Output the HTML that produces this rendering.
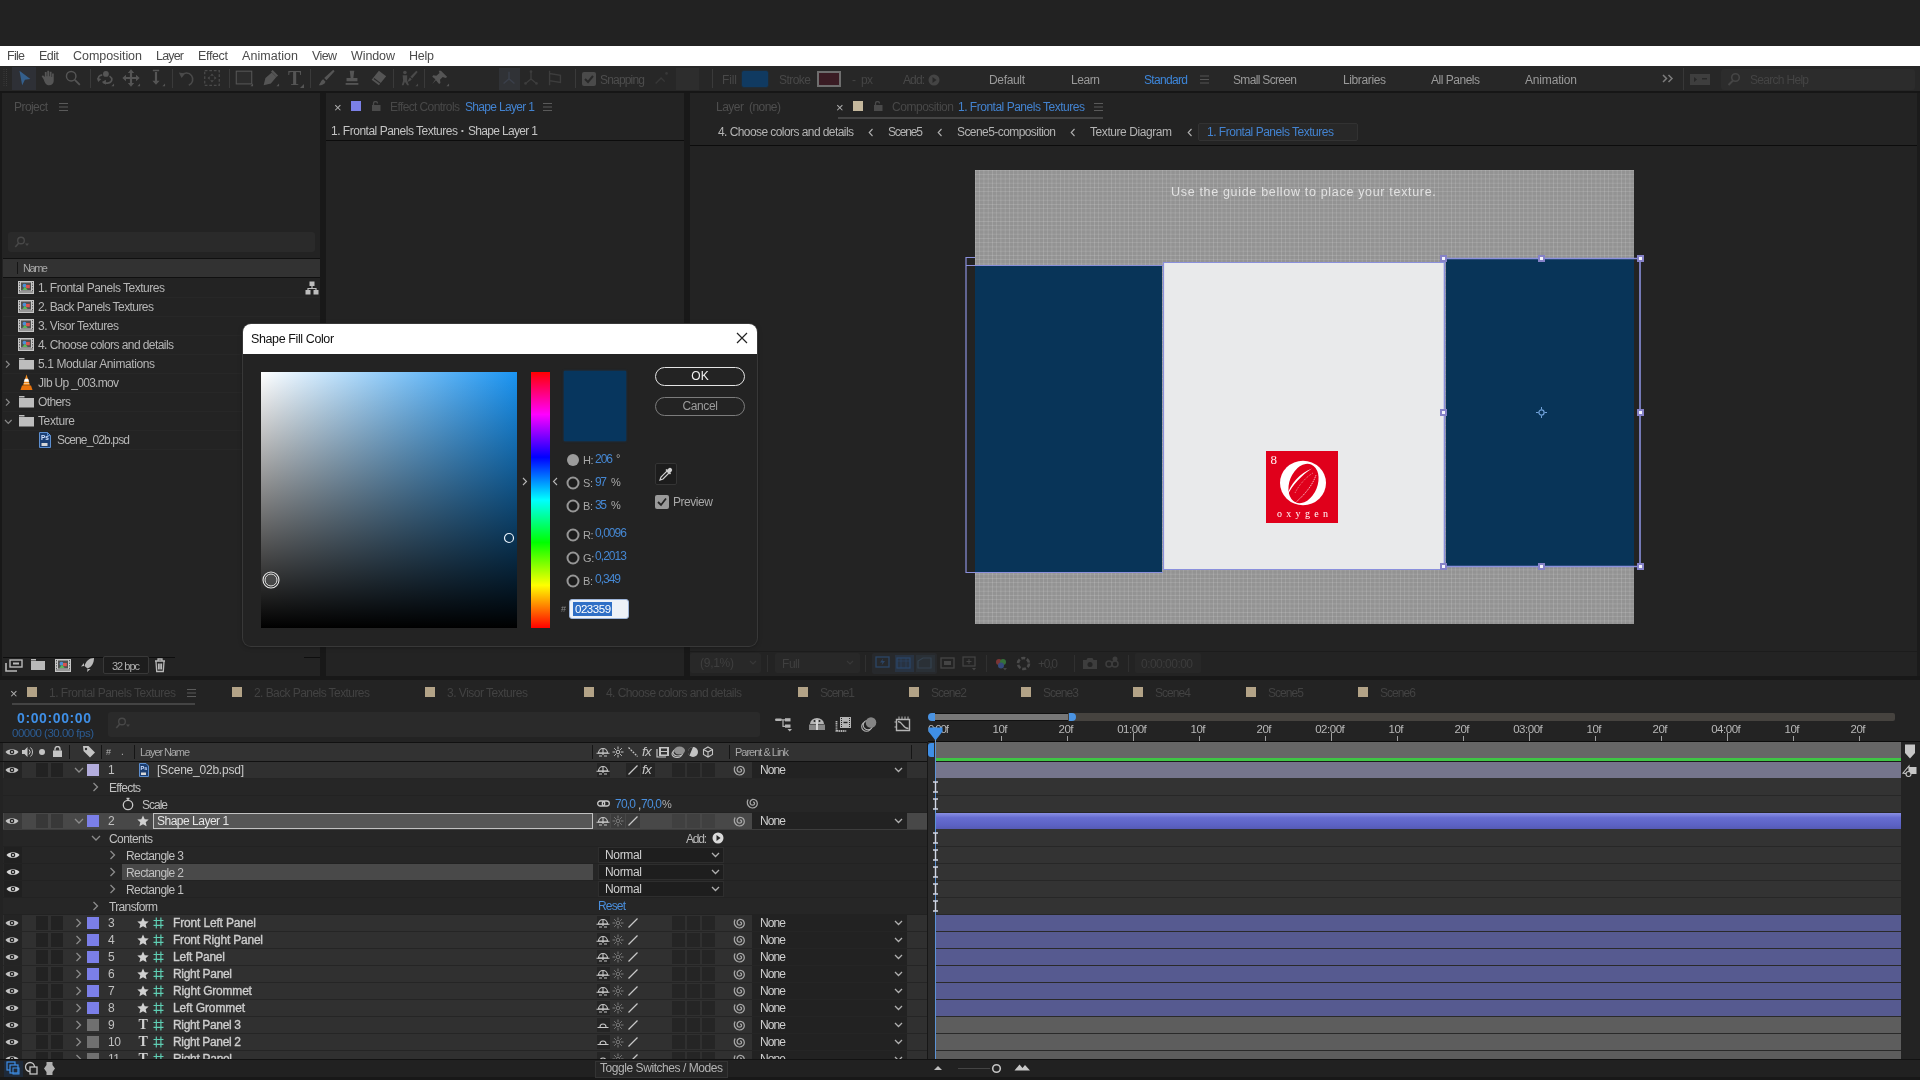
<!DOCTYPE html>
<html lang="en"><head><meta charset="utf-8"><title>After Effects - Shape Fill Color</title><style>
html,body{margin:0;padding:0;background:#222;overflow:hidden}
#r{will-change:transform;position:relative;width:1920px;height:1080px;overflow:hidden;background:#232323;font-family:"Liberation Sans",sans-serif;font-size:12px}
#r div,#r svg{position:absolute;box-sizing:border-box}
#r .t{white-space:pre;height:16px;line-height:16px}
</style></head><body><div id="r">
<div style="left:0px;top:0px;width:1920px;height:46px;background:#222222;"></div>
<div style="left:0px;top:46px;width:1920px;height:20px;background:#ffffff;"></div>
<div class="t" style="left:7px;top:48px;color:#4b4b4b;font-size:12.5px;letter-spacing:-0.71px;">File</div>
<div class="t" style="left:39px;top:48px;color:#4b4b4b;font-size:12.5px;letter-spacing:-0.51px;">Edit</div>
<div class="t" style="left:73px;top:48px;color:#4b4b4b;font-size:12.5px;letter-spacing:-0.05px;">Composition</div>
<div class="t" style="left:156px;top:48px;color:#4b4b4b;font-size:12.5px;letter-spacing:-0.82px;">Layer</div>
<div class="t" style="left:198px;top:48px;color:#4b4b4b;font-size:12.5px;letter-spacing:-0.35px;">Effect</div>
<div class="t" style="left:242px;top:48px;color:#4b4b4b;font-size:12.5px;letter-spacing:0.05px;">Animation</div>
<div class="t" style="left:312px;top:48px;color:#4b4b4b;font-size:12.5px;letter-spacing:-0.62px;">View</div>
<div class="t" style="left:351px;top:48px;color:#4b4b4b;font-size:12.5px;letter-spacing:-0.09px;">Window</div>
<div class="t" style="left:409px;top:48px;color:#4b4b4b;font-size:12.5px;letter-spacing:-0.24px;">Help</div>
<div style="left:0px;top:66px;width:1920px;height:25px;background:#272727;"></div>
<div style="left:0px;top:91px;width:1920px;height:2px;background:#161616;"></div>
<svg style="left:3px;top:68px;" width="6" height="20" viewBox="0 0 6 20"><path d="M1 1v18M3.5 1v18" stroke="#3a3a3a" stroke-width="1" stroke-dasharray="1 1"/></svg>
<div style="left:12px;top:67px;width:24px;height:23px;background:#2e3036;"></div>
<svg style="left:14px;top:68px;" width="20" height="20" viewBox="0 0 22 22"><path d="M6 3l12 9-6 1-3 6z" fill="#345f8c"/></svg>
<svg style="left:38px;top:68px;" width="20" height="20" viewBox="0 0 22 22"><path d="M6 12l-2-3 1.5-1 2 2V4.5h2V9h.7V3h2v6h.7V4h2v6h.6V6h1.8v8c0 3-2 5-5 5s-4.5-2-6.3-7z" fill="#555555"/></svg>
<svg style="left:63px;top:68px;" width="20" height="20" viewBox="0 0 22 22"><circle cx="9" cy="9" r="5.2" fill="none" stroke="#555555" stroke-width="1.6"/><path d="M13 13l5.5 5.5" stroke="#555555" stroke-width="2"/></svg>
<div style="left:90px;top:69px;width:1px;height:19px;background:#3a3a3a;"></div>
<div style="left:172px;top:69px;width:1px;height:19px;background:#3a3a3a;"></div>
<div style="left:229px;top:69px;width:1px;height:19px;background:#3a3a3a;"></div>
<div style="left:310px;top:69px;width:1px;height:19px;background:#3a3a3a;"></div>
<div style="left:393px;top:69px;width:1px;height:19px;background:#3a3a3a;"></div>
<div style="left:424px;top:69px;width:1px;height:19px;background:#3a3a3a;"></div>
<div style="left:575px;top:69px;width:1px;height:19px;background:#3a3a3a;"></div>
<div style="left:712px;top:69px;width:1px;height:19px;background:#3a3a3a;"></div>
<svg style="left:95px;top:68px;" width="20" height="20" viewBox="0 0 22 22"><circle cx="12" cy="6.500" r="3.200" fill="#555555"/><path d="M8 7.500C4.500 8 3 10 4 12.500M9 16c4 1.500 9 .5 9.500-3 .3-1.800-1-3-2.500-4" fill="none" stroke="#555555" stroke-width="1.800"/><path d="M2 11l5 1-3.500 3.500zM12 13l-4.500 2.500 4.500 3z" fill="#555555"/><path d="M18 20l3 0 0-3z" fill="#555555"/></svg>
<svg style="left:121px;top:68px;" width="20" height="20" viewBox="0 0 22 22"><path d="M11 1.500l3.500 4h-2.300v4.300h4.300V7.500l4 3.500-4 3.500v-2.300h-4.300v4.300h2.300L11 20.500l-3.500-4h2.300v-4.300H5.500v2.300L1.500 11l4-3.500v2.300h4.300V5.500H7.500z" fill="#555555"/><path d="M18 20l3 0 0-3z" fill="#555555"/></svg>
<svg style="left:146px;top:68px;" width="20" height="20" viewBox="0 0 22 22"><path d="M7.500 2h7v1.600h-7zM11 18.500l-4-4.500h2.800V4.500h2.400V14H15z" fill="#555555"/><path d="M18 20l3 0 0-3z" fill="#555555"/></svg>
<svg style="left:177px;top:68px;" width="20" height="20" viewBox="0 0 22 22"><path d="M5 8a7 7 0 1 1 8 11" fill="none" stroke="#4a4a4a" stroke-width="1.8"/><path d="M2 5l7 1-4 5z" fill="#4a4a4a"/></svg>
<svg style="left:202px;top:68px;" width="20" height="20" viewBox="0 0 22 22"><rect x="3" y="3" width="16" height="16" fill="none" stroke="#4a4a4a" stroke-width="1.400" stroke-dasharray="3 2"/><path d="M11 6l2 2.500h-4zM11 16l2-2.500h-4zM6 11l2.500-2v4zM16 11l-2.500-2v4z" fill="#4a4a4a"/></svg>
<svg style="left:234px;top:68px;" width="20" height="20" viewBox="0 0 22 22"><rect x="2.500" y="3.500" width="17" height="14" fill="#2c2c2c" stroke="#555555" stroke-width="1.200"/><path d="M18 20l3 0 0-3z" fill="#555555"/></svg>
<svg style="left:260px;top:68px;" width="20" height="20" viewBox="0 0 22 22"><path d="M4 19l2-8 7-6 5 5-6 7z" fill="#555555"/><path d="M13 3l6 6" stroke="#555555" stroke-width="2.500"/><path d="M18 20l3 0 0-3z" fill="#555555"/></svg>
<div class="t" style="left:288px;top:66px;height:24px;line-height:24px;font-size:20px;font-weight:bold;color:#555555;font-family:'Liberation Serif',serif">T</div>
<svg style="left:300px;top:84px;" width="4" height="4" viewBox="0 0 4 4"><path d="M0 4l4 0 0-4z" fill="#555555"/></svg>
<svg style="left:316px;top:68px;" width="20" height="20" viewBox="0 0 22 22"><path d="M19 2l1.500 1.500-9 10-2.500-2.500z" fill="#555555"/><path d="M8 12.500l2.500 2.500c-1 3-4 4-7.500 4 2-1.500 2-5 5-6.500z" fill="#555555"/></svg>
<svg style="left:342px;top:68px;" width="20" height="20" viewBox="0 0 22 22"><path d="M8.500 3h5l-1 8h4.500v3.500H5V11h4.500z" fill="#555555"/><rect x="4" y="16.500" width="14" height="2" fill="#555555"/></svg>
<svg style="left:368px;top:68px;" width="20" height="20" viewBox="0 0 22 22"><path d="M12 3l8 6-8 10-8-6z" fill="#555555"/><path d="M6.500 11.500l8 6" stroke="#282828" stroke-width="1.200"/></svg>
<svg style="left:399px;top:68px;" width="20" height="20" viewBox="0 0 22 22"><circle cx="6.500" cy="5" r="2" fill="#4a4a4a"/><path d="M4 8h5v6l2 5h-2l-2.500-4L5 19H3l1.500-5z" fill="#4a4a4a"/><path d="M19 3l1.500 1.500-6 7-2-2z" fill="#4a4a4a"/><path d="M12 10.500l2 2c-1 2-3 2.500-5 2.500 1.500-1 1.500-3.500 3-4.500z" fill="#4a4a4a"/><path d="M18 20l3 0 0-3z" fill="#4a4a4a"/></svg>
<svg style="left:430px;top:68px;" width="20" height="20" viewBox="0 0 22 22"><path d="M12 3l7 7-2 1-3-1-3 3 .5 3.500-1.500 1-3.500-4-4 4 3.500-5-3.500-3 1-1.500 3.500.5 3.500-3-1-2.500z" fill="#555555"/><path d="M18 20l3 0 0-3z" fill="#555555"/></svg>
<div style="left:499px;top:68px;width:21px;height:22px;background:#303236;"></div>
<svg style="left:499px;top:68px;" width="20" height="20" viewBox="0 0 22 22"><path d="M11 4v8l-6 5M11 12l6 5" fill="none" stroke="#3a3f4a" stroke-width="1.600"/></svg>
<svg style="left:521px;top:68px;" width="20" height="20" viewBox="0 0 22 22"><path d="M11 4v8l-6 5M11 12l6 5" fill="none" stroke="#3d3d3d" stroke-width="1.500"/><circle cx="11" cy="4" r="1.500" fill="#3d3d3d"/><circle cx="5" cy="17" r="1.500" fill="#3d3d3d"/><circle cx="17" cy="17" r="1.500" fill="#3d3d3d"/></svg>
<svg style="left:545px;top:68px;" width="20" height="20" viewBox="0 0 22 22"><path d="M5 6l12 2v8l-12-2zM5 3v16" fill="none" stroke="#3d3d3d" stroke-width="1.500"/></svg>
<div style="left:582px;top:72px;width:14px;height:14px;background:#4a4a4a;border-radius:2px"></div>
<svg style="left:582px;top:72px;" width="14" height="14" viewBox="0 0 14 14"><path d="M3 7l3 3 5-6" fill="none" stroke="#282828" stroke-width="2"/></svg>
<div class="t" style="left:600px;top:72px;color:#4d4d4d;font-size:12px;letter-spacing:-0.82px;">Snapping</div>
<svg style="left:652px;top:68px;" width="20" height="20" viewBox="0 0 22 22"><path d="M4 17l6-6 4 4" fill="none" stroke="#383838" stroke-width="1.500"/><circle cx="16" cy="6" r="1.500" fill="#383838"/></svg>
<div style="left:676px;top:68px;width:23px;height:22px;background:#2d2d2d;"></div>
<div class="t" style="left:722px;top:72px;color:#484848;font-size:12px;letter-spacing:-0.11px;">Fill</div>
<div style="left:742px;top:71px;width:26px;height:16px;background:#103a61;border-radius:2px;box-shadow:0 0 2px #103a61"></div>
<div class="t" style="left:779px;top:72px;color:#484848;font-size:12px;letter-spacing:-0.54px;">Stroke</div>
<div style="left:817px;top:71px;width:24px;height:16px;background:#3a1c24;border:2.500px solid #6e6e6e"></div>
<div class="t" style="left:852px;top:72px;color:#454545;font-size:12px;letter-spacing:-0.58px;">-  px</div>
<div class="t" style="left:903px;top:72px;color:#484848;font-size:12px;letter-spacing:-0.90px;">Add:</div>
<svg style="left:928px;top:74px;" width="12" height="12" viewBox="0 0 12 12"><circle cx="6" cy="6" r="5.500" fill="#444"/><path d="M4.500 3l4 3-4 3z" fill="#282828"/></svg>
<div class="t" style="left:989px;top:72px;color:#9a9a9a;font-size:12px;letter-spacing:-0.34px;">Default</div>
<div class="t" style="left:1071px;top:72px;color:#9a9a9a;font-size:12px;letter-spacing:-0.42px;">Learn</div>
<div class="t" style="left:1144px;top:72px;color:#3d86da;font-size:12px;letter-spacing:-0.67px;">Standard</div>
<div class="t" style="left:1233px;top:72px;color:#9a9a9a;font-size:12px;letter-spacing:-0.67px;">Small Screen</div>
<div class="t" style="left:1343px;top:72px;color:#9a9a9a;font-size:12px;letter-spacing:-0.38px;">Libraries</div>
<div class="t" style="left:1431px;top:72px;color:#9a9a9a;font-size:12px;letter-spacing:-0.48px;">All Panels</div>
<div class="t" style="left:1525px;top:72px;color:#9a9a9a;font-size:12px;letter-spacing:-0.17px;">Animation</div>
<svg style="left:1200px;top:75px;" width="10" height="9" viewBox="0 0 10 9"><path d="M0 1h9M0 4.500h9M0 8h9" stroke="#555" stroke-width="1"/></svg>
<svg style="left:1662px;top:74px;" width="12" height="9" viewBox="0 0 12 9"><path d="M1 1l3.500 3.500L1 8M6.500 1l3.500 3.500L6.500 8" fill="none" stroke="#7c7c7c" stroke-width="1.500"/></svg>
<div style="left:1683px;top:68px;width:1px;height:22px;background:#383838;"></div>
<svg style="left:1690px;top:74px;" width="20" height="11" viewBox="0 0 20 11"><rect x="0" y="0" width="20" height="11" fill="#3e3e3e"/><path d="M4 3l3 2.500-3 2.500zM12 4h5v1.500h-5z" fill="#282828"/></svg>
<div style="left:1721px;top:69px;width:194px;height:21px;background:#2c2c2c;border-radius:3px"></div>
<svg style="left:1727px;top:72px;" width="14" height="14" viewBox="0 0 14 14"><circle cx="8.500" cy="5.500" r="3.800" fill="none" stroke="#454545" stroke-width="1.600"/><path d="M6 8.500l-4.500 4.500" stroke="#454545" stroke-width="2"/></svg>
<div class="t" style="left:1750px;top:72px;color:#444444;font-size:12px;letter-spacing:-0.70px;">Search Help</div>
<div style="left:0px;top:93px;width:2px;height:587px;background:#181818;"></div>
<div style="left:320px;top:93px;width:6px;height:587px;background:#181818;"></div>
<div style="left:684px;top:93px;width:6px;height:587px;background:#181818;"></div>
<div style="left:0px;top:676px;width:1920px;height:4px;background:#181818;"></div>
<div class="t" style="left:14px;top:99px;color:#505050;font-size:12px;letter-spacing:-0.56px;">Project</div>
<svg style="left:59px;top:102px;" width="10" height="10" viewBox="0 0 10 10"><path d="M0 1.500h9M0 5h9M0 8.500h9" stroke="#5a5a5a" stroke-width="1"/></svg>
<div style="left:8px;top:232px;width:307px;height:20px;background:#2a2a2a;border-radius:3px"></div>
<svg style="left:13px;top:235px;" width="18" height="14" viewBox="0 0 18 14"><circle cx="8" cy="5.500" r="3.300" fill="none" stroke="#484848" stroke-width="1.400"/><path d="M5.800 8l-3.500 4" stroke="#484848" stroke-width="1.600"/><path d="M12 8.500h4l-2 2.500z" fill="#484848"/></svg>
<div style="left:3px;top:258px;width:317px;height:1px;background:#101010;"></div>
<div style="left:3px;top:259px;width:317px;height:18px;background:#323232;"></div>
<div style="left:3px;top:277px;width:317px;height:1px;background:#101010;"></div>
<div style="left:17px;top:262px;width:1px;height:12px;background:#151515;"></div>
<div class="t" style="left:23px;top:260px;color:#a8a8a8;font-size:11px;letter-spacing:-1.45px;">Name</div>
<div style="left:3px;top:297px;width:317px;height:1px;background:#272727;"></div>
<div class="t" style="left:38px;top:280px;color:#b6b6b6;font-size:12px;letter-spacing:-0.49px;">1. Frontal Panels Textures</div>
<svg style="left:18px;top:281px;" width="16" height="13" viewBox="0 0 16 13"><rect x="0" y="0" width="16" height="13" fill="#c6c6c6"/><rect x="3" y="1.500" width="10" height="8" fill="#505050"/><path d="M1.500 1v9.500M14.500 1v9.500" stroke="#555" stroke-width="1" stroke-dasharray="1.300 1.300"/><path d="M1 11h14" stroke="#666" stroke-width="1"/><circle cx="6.500" cy="4.700" r="1.900" fill="#4c8fd6"/><rect x="8" y="4" width="3.800" height="3.200" fill="#d9534f"/><path d="M4.300 9l2.700-3.300L9.700 9z" fill="#5cb85c"/></svg>
<div style="left:3px;top:316px;width:317px;height:1px;background:#272727;"></div>
<div class="t" style="left:38px;top:299px;color:#b6b6b6;font-size:12px;letter-spacing:-0.57px;">2. Back Panels Textures</div>
<svg style="left:18px;top:300px;" width="16" height="13" viewBox="0 0 16 13"><rect x="0" y="0" width="16" height="13" fill="#c6c6c6"/><rect x="3" y="1.500" width="10" height="8" fill="#505050"/><path d="M1.500 1v9.500M14.500 1v9.500" stroke="#555" stroke-width="1" stroke-dasharray="1.300 1.300"/><path d="M1 11h14" stroke="#666" stroke-width="1"/><circle cx="6.500" cy="4.700" r="1.900" fill="#4c8fd6"/><rect x="8" y="4" width="3.800" height="3.200" fill="#d9534f"/><path d="M4.300 9l2.700-3.300L9.700 9z" fill="#5cb85c"/></svg>
<div style="left:3px;top:335px;width:317px;height:1px;background:#272727;"></div>
<div class="t" style="left:38px;top:318px;color:#b6b6b6;font-size:12px;letter-spacing:-0.50px;">3. Visor Textures</div>
<svg style="left:18px;top:319px;" width="16" height="13" viewBox="0 0 16 13"><rect x="0" y="0" width="16" height="13" fill="#c6c6c6"/><rect x="3" y="1.500" width="10" height="8" fill="#505050"/><path d="M1.500 1v9.500M14.500 1v9.500" stroke="#555" stroke-width="1" stroke-dasharray="1.300 1.300"/><path d="M1 11h14" stroke="#666" stroke-width="1"/><circle cx="6.500" cy="4.700" r="1.900" fill="#4c8fd6"/><rect x="8" y="4" width="3.800" height="3.200" fill="#d9534f"/><path d="M4.300 9l2.700-3.300L9.700 9z" fill="#5cb85c"/></svg>
<div style="left:3px;top:354px;width:317px;height:1px;background:#272727;"></div>
<div class="t" style="left:38px;top:337px;color:#b6b6b6;font-size:12px;letter-spacing:-0.57px;">4. Choose colors and details</div>
<svg style="left:18px;top:338px;" width="16" height="13" viewBox="0 0 16 13"><rect x="0" y="0" width="16" height="13" fill="#c6c6c6"/><rect x="3" y="1.500" width="10" height="8" fill="#505050"/><path d="M1.500 1v9.500M14.500 1v9.500" stroke="#555" stroke-width="1" stroke-dasharray="1.300 1.300"/><path d="M1 11h14" stroke="#666" stroke-width="1"/><circle cx="6.500" cy="4.700" r="1.900" fill="#4c8fd6"/><rect x="8" y="4" width="3.800" height="3.200" fill="#d9534f"/><path d="M4.300 9l2.700-3.300L9.700 9z" fill="#5cb85c"/></svg>
<div style="left:3px;top:373px;width:317px;height:1px;background:#272727;"></div>
<div class="t" style="left:38px;top:356px;color:#b6b6b6;font-size:12px;letter-spacing:-0.40px;">5.1 Modular Animations</div>
<svg style="left:19px;top:357px;" width="15" height="13" viewBox="0 0 15 13"><path d="M0 2.500h5.500V1H0z" fill="#bdbdbd"/><rect x="0" y="3" width="15" height="9.500" fill="#bdbdbd"/></svg>
<svg style="left:5px;top:360px;" width="6" height="9" viewBox="0 0 6 9"><path d="M1 1l3.300 3.300L1 7.600" fill="none" stroke="#8a8a8a" stroke-width="1.200"/></svg>
<div style="left:3px;top:392px;width:317px;height:1px;background:#272727;"></div>
<div class="t" style="left:38px;top:375px;color:#b6b6b6;font-size:12px;letter-spacing:-0.69px;">JIb Up _003.mov</div>
<svg style="left:19px;top:374px;" width="15" height="17" viewBox="0 0 15 17"><path d="M7.500 0.500l3.500 11h-7z" fill="#f08a1c"/><path d="M6 5h3l.8 2.500H5.200zM4.600 9.500h5.800" fill="#fff" stroke="#fff" stroke-width="0.500"/><path d="M1.500 16l1.500-4.500h9L13.500 16z" fill="#e9730c"/></svg>
<div style="left:3px;top:411px;width:317px;height:1px;background:#272727;"></div>
<div class="t" style="left:38px;top:394px;color:#b6b6b6;font-size:12px;letter-spacing:-0.60px;">Others</div>
<svg style="left:19px;top:395px;" width="15" height="13" viewBox="0 0 15 13"><path d="M0 2.500h5.500V1H0z" fill="#bdbdbd"/><rect x="0" y="3" width="15" height="9.500" fill="#bdbdbd"/></svg>
<svg style="left:5px;top:398px;" width="6" height="9" viewBox="0 0 6 9"><path d="M1 1l3.300 3.300L1 7.600" fill="none" stroke="#8a8a8a" stroke-width="1.200"/></svg>
<div style="left:3px;top:430px;width:317px;height:1px;background:#272727;"></div>
<div class="t" style="left:38px;top:413px;color:#b6b6b6;font-size:12px;letter-spacing:-0.39px;">Texture</div>
<svg style="left:19px;top:414px;" width="15" height="13" viewBox="0 0 15 13"><path d="M0 2.500h5.500V1H0z" fill="#bdbdbd"/><rect x="0" y="3" width="15" height="9.500" fill="#bdbdbd"/></svg>
<svg style="left:4px;top:419px;" width="9" height="6" viewBox="0 0 9 6"><path d="M1 1l3.300 3.300L7.600 1" fill="none" stroke="#8a8a8a" stroke-width="1.200"/></svg>
<div style="left:3px;top:449px;width:317px;height:1px;background:#272727;"></div>
<svg style="left:39px;top:432px;" width="12" height="16" viewBox="0 0 12 16"><path d="M0.500 0.500h8l3 3v12h-11z" fill="#1c3f73" stroke="#5d8fd0" stroke-width="1"/><path d="M8.500 0.500v3h3" fill="none" stroke="#5d8fd0" stroke-width="1"/><rect x="2.500" y="11" width="6" height="3" fill="#d8d8d8"/></svg>
<div class="t" style="left:41px;top:434px;font-size:6.500px;line-height:7px;height:7px;color:#cfe0ff;font-weight:bold">Ps</div>
<div class="t" style="left:57px;top:432px;color:#b6b6b6;font-size:12px;letter-spacing:-0.87px;">Scene_02b.psd</div>
<svg style="left:305px;top:281px;" width="14" height="14" viewBox="0 0 14 14"><rect x="4.500" y="0.500" width="5" height="4.500" fill="#bdbdbd"/><rect x="0.500" y="9" width="5" height="4.500" fill="#bdbdbd"/><rect x="8.500" y="9" width="5" height="4.500" fill="#bdbdbd"/><path d="M7 5v2.500M3 9V7.500h8V9" fill="none" stroke="#bdbdbd" stroke-width="1.200"/></svg>
<div style="left:3px;top:657px;width:172px;height:1px;background:#0e0e0e;"></div>
<div style="left:304px;top:657px;width:16px;height:1px;background:#0e0e0e;"></div>
<svg style="left:5px;top:659px;" width="18" height="13" viewBox="0 0 18 13"><rect x="5" y="1" width="12" height="7" fill="none" stroke="#b9b9b9" stroke-width="1.400"/><rect x="8" y="3.500" width="6" height="2" fill="#b9b9b9"/><path d="M1 4v8h11" fill="none" stroke="#b9b9b9" stroke-width="1.600"/></svg>
<svg style="left:31px;top:659px;" width="15" height="12" viewBox="0 0 15 12"><path d="M0 1.500h5V0H0z" fill="#b9b9b9"/><rect x="0" y="2" width="14" height="9" fill="#b9b9b9"/></svg>
<svg style="left:55px;top:659px;" width="16" height="13" viewBox="0 0 16 13"><rect x="0" y="0" width="16" height="13" fill="#c6c6c6"/><rect x="3" y="1.500" width="10" height="8" fill="#505050"/><path d="M1.500 1v9.500M14.500 1v9.500" stroke="#555" stroke-width="1" stroke-dasharray="1.300 1.300"/><path d="M1 11h14" stroke="#666" stroke-width="1"/><circle cx="6.500" cy="4.700" r="1.900" fill="#4c8fd6"/><rect x="8" y="4" width="3.800" height="3.200" fill="#d9534f"/><path d="M4.300 9l2.700-3.300L9.700 9z" fill="#5cb85c"/></svg>
<svg style="left:80px;top:657px;" width="16" height="16" viewBox="0 0 16 16"><path d="M14 1c-5 0-8 3-9.500 8l3 2.500C12 10 14 6 14 1zM4 9l-3 .5 3-3.500zM7.500 12l-.500 3 3.500-3z" fill="#b9b9b9"/></svg>
<div style="left:103px;top:656px;width:46px;height:18px;background:#1d1d1d;border:1px solid #383838;border-radius:2px"></div>
<div class="t" style="left:112px;top:658px;color:#b0b0b0;font-size:11px;letter-spacing:-1.00px;">32 bpc</div>
<svg style="left:154px;top:658px;" width="12" height="15" viewBox="0 0 12 15"><path d="M1 3h10M4 3V1h4v2M2 3.500l.7 10h6.600l.7-10M4.500 5.500v6M6 5.500v6M7.500 5.500v6" fill="none" stroke="#b9b9b9" stroke-width="1.300"/></svg>
<div class="t" style="left:334px;top:100px;color:#b0b0b0;font-size:13px;letter-spacing:-0.46px;">×</div>
<div style="left:351px;top:101px;width:10px;height:10px;background:#7b80e6;"></div>
<svg style="left:372px;top:101px;" width="9" height="10" viewBox="0 0 9 10"><rect x="0" y="4" width="8.500" height="6" fill="#4a4a4a"/><path d="M1.500 4V2.500a2 2 0 0 1 4 0" fill="none" stroke="#4a4a4a" stroke-width="1.300"/></svg>
<div class="t" style="left:390px;top:99px;color:#484848;font-size:12px;letter-spacing:-0.61px;">Effect Controls</div>
<div class="t" style="left:465px;top:99px;color:#4383d0;font-size:12px;letter-spacing:-0.67px;">Shape Layer 1</div>
<svg style="left:543px;top:102px;" width="10" height="10" viewBox="0 0 10 10"><path d="M0 1.500h9M0 5h9M0 8.500h9" stroke="#5a5a5a" stroke-width="1"/></svg>
<div class="t" style="left:331px;top:123px;color:#c4c4c4;font-size:12px;letter-spacing:-0.49px;">1. Frontal Panels Textures</div>
<div class="t" style="left:461px;top:123px;color:#c4c4c4;font-size:8px;letter-spacing:-0.28px;">•</div>
<div class="t" style="left:468px;top:123px;color:#c4c4c4;font-size:12px;letter-spacing:-0.67px;">Shape Layer 1</div>
<div style="left:326px;top:140px;width:358px;height:1px;background:#0c0c0c;"></div>
<div class="t" style="left:716px;top:99px;color:#4e4e4e;font-size:12px;letter-spacing:-0.53px;">Layer  (none)</div>
<div class="t" style="left:836px;top:100px;color:#b0b0b0;font-size:13px;letter-spacing:-0.46px;">×</div>
<div style="left:853px;top:101px;width:10px;height:10px;background:#c4b79c;"></div>
<svg style="left:874px;top:101px;" width="9" height="10" viewBox="0 0 9 10"><rect x="0" y="4" width="8.500" height="6" fill="#4a4a4a"/><path d="M1.500 4V2.500a2 2 0 0 1 4 0" fill="none" stroke="#4a4a4a" stroke-width="1.300"/></svg>
<div class="t" style="left:892px;top:99px;color:#484848;font-size:12px;letter-spacing:-0.47px;">Composition</div>
<div class="t" style="left:958px;top:99px;color:#4383d0;font-size:12px;letter-spacing:-0.49px;">1. Frontal Panels Textures</div>
<svg style="left:1094px;top:102px;" width="10" height="10" viewBox="0 0 10 10"><path d="M0 1.500h9M0 5h9M0 8.500h9" stroke="#5a5a5a" stroke-width="1"/></svg>
<div style="left:838px;top:117px;width:265px;height:2px;background:#444444;"></div>
<div class="t" style="left:718px;top:124px;color:#b4b4b4;font-size:12px;letter-spacing:-0.57px;">4. Choose colors and details</div>
<div class="t" style="left:888px;top:124px;color:#b4b4b4;font-size:12px;letter-spacing:-1.14px;">Scene5</div>
<div class="t" style="left:957px;top:124px;color:#b4b4b4;font-size:12px;letter-spacing:-0.57px;">Scene5-composition</div>
<div class="t" style="left:1090px;top:124px;color:#b4b4b4;font-size:12px;letter-spacing:-0.43px;">Texture Diagram</div>
<svg style="left:868px;top:127.5px;" width="6" height="9" viewBox="0 0 6 9"><path d="M4.500 1L1.200 4.500 4.500 8" fill="none" stroke="#b0b0b0" stroke-width="1.100"/></svg>
<svg style="left:937px;top:127.5px;" width="6" height="9" viewBox="0 0 6 9"><path d="M4.500 1L1.200 4.500 4.500 8" fill="none" stroke="#b0b0b0" stroke-width="1.100"/></svg>
<svg style="left:1070px;top:127.5px;" width="6" height="9" viewBox="0 0 6 9"><path d="M4.500 1L1.200 4.500 4.500 8" fill="none" stroke="#b0b0b0" stroke-width="1.100"/></svg>
<svg style="left:1187px;top:127.5px;" width="6" height="9" viewBox="0 0 6 9"><path d="M4.500 1L1.200 4.500 4.500 8" fill="none" stroke="#b0b0b0" stroke-width="1.100"/></svg>
<div style="left:1198px;top:123px;width:160px;height:18px;background:#282828;border:1px solid #323232;border-radius:2px"></div>
<div class="t" style="left:1207px;top:124px;color:#4383d0;font-size:12px;letter-spacing:-0.49px;">1. Frontal Panels Textures</div>
<div style="left:690px;top:145px;width:1230px;height:1px;background:#0c0c0c;"></div>
<div style="left:975px;top:170px;width:659px;height:454px;background-color:#939393;background-image:linear-gradient(rgba(255,255,255,.14) 1px,transparent 1px),linear-gradient(90deg,rgba(255,255,255,.14) 1px,transparent 1px);background-size:4.250px 4.250px"></div>
<div class="t" style="left:1171px;top:184px;color:#e2e2e2;font-size:12.5px;letter-spacing:0.68px;">Use the guide bellow to place your texture.</div>
<div style="left:975px;top:266px;width:187px;height:306px;background:#083458;"></div>
<div style="left:1164px;top:263px;width:280px;height:306px;background:#e9eaeb;"></div>
<div style="left:1446px;top:259px;width:188px;height:307px;background:#083458;"></div>
<svg style="left:960px;top:250px;" width="690" height="330" viewBox="0 0 690 330"><g fill="none" stroke="#8a90dc" stroke-width="1.200"><path d="M15 7.500H6V322.500H203"/><path d="M6 15.500H203.500"/><path d="M484 12.500H203.500V319.500H484" /><path d="M484.500 8.500H680V316.500H484.500z" stroke-width="1.600"/></g></svg>
<div style="left:1440px;top:255px;width:7px;height:7px;background:#f4f4fa;border:2px solid #8682c8"></div>
<div style="left:1537.5px;top:255px;width:7px;height:7px;background:#f4f4fa;border:2px solid #8682c8"></div>
<div style="left:1636.5px;top:255px;width:7px;height:7px;background:#f4f4fa;border:2px solid #8682c8"></div>
<div style="left:1440px;top:408.5px;width:7px;height:7px;background:#f4f4fa;border:2px solid #8682c8"></div>
<div style="left:1636.5px;top:408.5px;width:7px;height:7px;background:#f4f4fa;border:2px solid #8682c8"></div>
<div style="left:1440px;top:563px;width:7px;height:7px;background:#f4f4fa;border:2px solid #8682c8"></div>
<div style="left:1537.5px;top:563px;width:7px;height:7px;background:#f4f4fa;border:2px solid #8682c8"></div>
<div style="left:1636.5px;top:563px;width:7px;height:7px;background:#f4f4fa;border:2px solid #8682c8"></div>
<svg style="left:1535px;top:406px;" width="13" height="13" viewBox="0 0 13 13"><circle cx="6.500" cy="6.500" r="2.600" fill="none" stroke="#6fa0d8" stroke-width="1.200"/><path d="M6.500 1v2.500M6.500 9.500V12M1 6.500h2.500M9.500 6.500H12" stroke="#6fa0d8" stroke-width="1"/></svg>
<div style="left:1266px;top:451px;width:72px;height:72px;background:#e0001b;"></div>
<svg style="left:1266px;top:451px;" width="72" height="72" viewBox="0 0 72 72"><ellipse cx="37" cy="32" rx="23" ry="22.200" fill="#fff"/><ellipse cx="37.500" cy="32.500" rx="14" ry="20.500" fill="#e0001b" transform="rotate(22 37.500 32.500)"/><path d="M21 45C24 33 34 22 46 17.500C36 24 27 33 21 45z" fill="#fff"/><path d="M29 52C36 46 46 36 50 24" fill="none" stroke="#fff" stroke-width="0.700" stroke-dasharray="1.500 0.800"/><path d="M29 42C33 34 40 26 47 22" fill="none" stroke="#fff" stroke-width="0.500" stroke-dasharray="1 1"/></svg>
<div class="t" style="left:1270.5px;top:452px;color:#fff0f0;font-size:13px;letter-spacing:-1.00px;font-family:'Liberation Serif',serif;">8</div>
<div class="t" style="left:1277px;top:506px;color:#ffffff;font-size:10px;letter-spacing:4.31px;font-family:'Liberation Serif',serif;">oxygen</div>
<div style="left:690px;top:653px;width:71px;height:20px;background:#282828;border-radius:2px"></div>
<div class="t" style="left:700px;top:655px;color:#3f3f3f;font-size:12px;letter-spacing:-0.27px;">(9,1%)</div>
<svg style="left:749px;top:660px;" width="8" height="6" viewBox="0 0 8 6"><path d="M1 1l3 3 3-3" fill="none" stroke="#383838" stroke-width="1.200"/></svg>
<div style="left:767px;top:655px;width:1px;height:17px;background:#303030;"></div>
<div style="left:775px;top:653px;width:85px;height:20px;background:#282828;border-radius:2px"></div>
<div class="t" style="left:782px;top:656px;color:#3f3f3f;font-size:12px;letter-spacing:-0.44px;">Full</div>
<svg style="left:846px;top:660px;" width="8" height="6" viewBox="0 0 8 6"><path d="M1 1l3 3 3-3" fill="none" stroke="#383838" stroke-width="1.200"/></svg>
<div style="left:865px;top:655px;width:1px;height:17px;background:#303030;"></div>
<div style="left:872px;top:653px;width:65px;height:21px;background:#27292c;border-radius:2px"></div>
<div style="left:895px;top:655px;width:19px;height:17px;background:#283342;"></div>
<div style="left:916px;top:655px;width:19px;height:17px;background:#2a3036;"></div>
<svg style="left:875px;top:656px;" width="16" height="14" viewBox="0 0 16 14"><rect x="1" y="1" width="13" height="10" fill="none" stroke="#2c4566" stroke-width="1.300"/><path d="M8 2.500l-3 4h2.500l-1 3 3.500-4.500H7.500z" fill="#2c4566"/></svg>
<svg style="left:896px;top:656px;" width="16" height="14" viewBox="0 0 16 14"><rect x="1" y="2" width="13" height="10" fill="none" stroke="#2b466a" stroke-width="1.200"/><path d="M1 5h13M5 2v10M10 2v10" stroke="#2b466a" stroke-width="0.600"/></svg>
<svg style="left:917px;top:656px;" width="16" height="14" viewBox="0 0 16 14"><path d="M1 12V5l5-3h8v10z" fill="none" stroke="#34414f" stroke-width="1.200"/></svg>
<svg style="left:940px;top:657px;" width="16" height="13" viewBox="0 0 16 13"><rect x="1" y="1" width="13" height="10" fill="none" stroke="#454545" stroke-width="1.300"/><rect x="4" y="4" width="7" height="4" fill="#454545"/></svg>
<svg style="left:962px;top:656px;" width="16" height="15" viewBox="0 0 16 15"><rect x="1" y="1" width="12" height="9" fill="none" stroke="#454545" stroke-width="1.200"/><path d="M7 3v5M4.500 5.500h5" stroke="#454545" stroke-width="1"/><path d="M10 12h4l-2 2.500z" fill="#454545"/></svg>
<div style="left:986px;top:655px;width:1px;height:17px;background:#303030;"></div>
<svg style="left:994px;top:657px;" width="14" height="14" viewBox="0 0 14 14"><circle cx="5" cy="5" r="3" fill="#7a3535"/><circle cx="9" cy="5" r="3" fill="#35703a"/><circle cx="7" cy="8.500" r="3" fill="#354a7a"/><path d="M9 11h4l-2 2.500z" fill="#454545"/></svg>
<svg style="left:1016px;top:656px;" width="15" height="15" viewBox="0 0 15 15"><circle cx="7.500" cy="7.500" r="5.500" fill="none" stroke="#4a4a4a" stroke-width="2.600" stroke-dasharray="4 1.760"/></svg>
<div class="t" style="left:1038px;top:656px;color:#3f3f3f;font-size:12px;letter-spacing:-1.23px;">+0,0</div>
<div style="left:1074px;top:655px;width:1px;height:17px;background:#303030;"></div>
<svg style="left:1082px;top:657px;" width="16" height="13" viewBox="0 0 16 13"><path d="M1 3h3.500l1-2h5l1 2H15v9H1z" fill="#3d3d3d"/><circle cx="8" cy="7.500" r="2.500" fill="#232323"/></svg>
<svg style="left:1104px;top:655px;" width="17" height="15" viewBox="0 0 17 15"><circle cx="5" cy="9" r="3" fill="none" stroke="#3d3d3d" stroke-width="1.500"/><circle cx="11" cy="9" r="3" fill="none" stroke="#3d3d3d" stroke-width="1.500"/><circle cx="11" cy="4" r="2.500" fill="#3d3d3d"/></svg>
<div style="left:1128px;top:655px;width:1px;height:17px;background:#303030;"></div>
<div style="left:1135px;top:653px;width:66px;height:20px;background:#272727;border-radius:2px"></div>
<div class="t" style="left:1141px;top:656px;color:#3c3c3c;font-size:12px;letter-spacing:-0.52px;">0:00:00:00</div>
<div style="left:690px;top:651px;width:1230px;height:1px;background:#1c1c1c;"></div>
<div style="left:1917px;top:93px;width:3px;height:583px;background:#1b1b1b;"></div>
<div class="t" style="left:10px;top:686px;color:#b0b0b0;font-size:13px;letter-spacing:-0.46px;">×</div>
<div style="left:27px;top:687px;width:10px;height:10px;background:#b3a387;"></div>
<div class="t" style="left:49px;top:685px;color:#424242;font-size:12px;letter-spacing:-0.49px;">1. Frontal Panels Textures</div>
<div style="left:232px;top:687px;width:10px;height:10px;background:#b3a387;"></div>
<div class="t" style="left:254px;top:685px;color:#424242;font-size:12px;letter-spacing:-0.57px;">2. Back Panels Textures</div>
<div style="left:425px;top:687px;width:10px;height:10px;background:#b3a387;"></div>
<div class="t" style="left:447px;top:685px;color:#424242;font-size:12px;letter-spacing:-0.50px;">3. Visor Textures</div>
<div style="left:584px;top:687px;width:10px;height:10px;background:#b3a387;"></div>
<div class="t" style="left:606px;top:685px;color:#424242;font-size:12px;letter-spacing:-0.57px;">4. Choose colors and details</div>
<div style="left:798px;top:687px;width:10px;height:10px;background:#b3a387;"></div>
<div class="t" style="left:820px;top:685px;color:#424242;font-size:12px;letter-spacing:-1.14px;">Scene1</div>
<div style="left:909px;top:687px;width:10px;height:10px;background:#b3a387;"></div>
<div class="t" style="left:931px;top:685px;color:#424242;font-size:12px;letter-spacing:-0.94px;">Scene2</div>
<div style="left:1021px;top:687px;width:10px;height:10px;background:#b3a387;"></div>
<div class="t" style="left:1043px;top:685px;color:#424242;font-size:12px;letter-spacing:-0.94px;">Scene3</div>
<div style="left:1133px;top:687px;width:10px;height:10px;background:#b3a387;"></div>
<div class="t" style="left:1155px;top:685px;color:#424242;font-size:12px;letter-spacing:-0.94px;">Scene4</div>
<div style="left:1246px;top:687px;width:10px;height:10px;background:#b3a387;"></div>
<div class="t" style="left:1268px;top:685px;color:#424242;font-size:12px;letter-spacing:-0.94px;">Scene5</div>
<div style="left:1358px;top:687px;width:10px;height:10px;background:#b3a387;"></div>
<div class="t" style="left:1380px;top:685px;color:#424242;font-size:12px;letter-spacing:-0.94px;">Scene6</div>
<svg style="left:187px;top:688px;" width="10" height="10" viewBox="0 0 10 10"><path d="M0 1.500h9M0 5h9M0 8.500h9" stroke="#5a5a5a" stroke-width="1"/></svg>
<div style="left:12px;top:703px;width:183px;height:2px;background:#444444;"></div>
<div class="t" style="left:17px;top:710px;color:#3f8fe6;font-size:14px;letter-spacing:0.61px;font-weight:bold;">0:00:00:00</div>
<div class="t" style="left:12px;top:725px;color:#2c5c93;font-size:11.5px;letter-spacing:-0.51px;">00000 (30.00 fps)</div>
<div style="left:108px;top:712px;width:652px;height:25px;background:#2a2a2a;border-radius:3px"></div>
<svg style="left:114px;top:716px;" width="18" height="14" viewBox="0 0 18 14"><circle cx="8" cy="5.500" r="3.300" fill="none" stroke="#484848" stroke-width="1.400"/><path d="M5.800 8l-3.500 4" stroke="#484848" stroke-width="1.600"/><path d="M12 8.500h4l-2 2.500z" fill="#484848"/></svg>
<svg style="left:774px;top:717px;" width="19" height="15" viewBox="0 0 19 15"><rect x="1" y="1.500" width="7" height="2.500" rx="1.200" fill="#b4b4b4"/><path d="M8 2.800h3M9 2.800v6.500h2.500" fill="none" stroke="#b4b4b4" stroke-width="1.200"/><rect x="11" y="1.200" width="5.500" height="3.200" fill="#b4b4b4"/><rect x="11" y="7.500" width="5.500" height="3.200" fill="#b4b4b4"/><path d="M13.500 12h4.500l-2.250 2.500z" fill="#b4b4b4"/></svg>
<svg style="left:808px;top:716px;" width="18" height="16" viewBox="0 0 18 16"><path d="M2 8a7 6 0 0 1 14 0z" fill="#b4b4b4"/><circle cx="6.500" cy="5" r="1" fill="#232323"/><circle cx="11.500" cy="5" r="1" fill="#232323"/><rect x="1" y="8.500" width="16" height="5.500" fill="#888888"/><rect x="8" y="4" width="2" height="10" fill="#d4d4d4"/></svg>
<svg style="left:835px;top:716px;" width="17" height="16" viewBox="0 0 17 16"><path d="M1.500 5v10h10" fill="none" stroke="#b4b4b4" stroke-width="1.800" stroke-dasharray="1.200 0.600"/><rect x="5" y="1" width="11" height="11" fill="#b4b4b4"/><path d="M6.500 2v9M14.500 2v9" stroke="#232323" stroke-width="1" stroke-dasharray="1 1"/><rect x="8.500" y="5.800" width="4" height="1.400" fill="#232323"/></svg>
<svg style="left:860px;top:716px;" width="18" height="16" viewBox="0 0 18 16"><circle cx="6.500" cy="10.500" r="4.800" fill="#232323" stroke="#b4b4b4" stroke-width="1.100"/><circle cx="8" cy="9" r="4.800" fill="#232323" stroke="#b4b4b4" stroke-width="1.100"/><circle cx="11" cy="6.500" r="5.300" fill="#858585"/></svg>
<svg style="left:894px;top:715px;" width="18" height="18" viewBox="0 0 18 18"><path d="M2.500 4.500h13v11h-13z" fill="none" stroke="#b4b4b4" stroke-width="1.400"/><path d="M5 1.500v3M8 1.500v3M11 1.500v3M14 1.500v3M0.500 7h2M0.500 12h2" stroke="#b4b4b4" stroke-width="1"/><path d="M4 6.500c5 0 4.500 7 10.500 7" fill="none" stroke="#b4b4b4" stroke-width="1.300"/></svg>
<div style="left:0px;top:742px;width:928px;height:1px;background:#111111;"></div>
<div style="left:3px;top:743px;width:925px;height:18px;background:#323232;"></div>
<div style="left:0px;top:761px;width:928px;height:1px;background:#111111;"></div>
<svg style="left:5px;top:747px;" width="14" height="10" viewBox="0 0 14 10"><path d="M0.500 5C3 1.200 11 1.200 13.500 5 11 8.800 3 8.800 0.500 5z" fill="#c4c4c4"/><circle cx="7" cy="5" r="2.300" fill="#222"/><circle cx="7" cy="5" r="1" fill="#c4c4c4"/></svg>
<svg style="left:21px;top:746px;" width="12" height="12" viewBox="0 0 12 12"><path d="M1 4h2.500l3-3v10l-3-3H1z" fill="#c4c4c4"/><path d="M8 3.500a3.500 3.500 0 0 1 0 5M9.500 1.500a6 6 0 0 1 0 9" fill="none" stroke="#c4c4c4" stroke-width="1"/></svg>
<svg style="left:38px;top:748px;" width="8" height="8" viewBox="0 0 8 8"><circle cx="4" cy="4" r="3" fill="#c4c4c4"/></svg>
<svg style="left:53px;top:746px;" width="9" height="11" viewBox="0 0 9 11"><rect x="0" y="4.500" width="9" height="6.500" fill="#c4c4c4"/><path d="M2 4.500V3a2.500 2.500 0 0 1 5 0v1.500" fill="none" stroke="#c4c4c4" stroke-width="1.400"/></svg>
<div style="left:69px;top:745px;width:1px;height:14px;background:#151515;"></div>
<div style="left:101px;top:745px;width:1px;height:14px;background:#151515;"></div>
<div style="left:134px;top:745px;width:1px;height:14px;background:#151515;"></div>
<div style="left:592px;top:745px;width:1px;height:14px;background:#151515;"></div>
<div style="left:729px;top:745px;width:1px;height:14px;background:#151515;"></div>
<div style="left:911px;top:745px;width:1px;height:14px;background:#151515;"></div>
<svg style="left:82px;top:745px;" width="14" height="14" viewBox="0 0 14 14"><path d="M1 1h5.500l6.500 6.500-5 5L1.500 6z" fill="#c4c4c4"/><circle cx="4" cy="4" r="1.200" fill="#323232"/></svg>
<div class="t" style="left:106px;top:744px;color:#b0b0b0;font-size:9px;letter-spacing:-0.32px;">#</div>
<div class="t" style="left:121px;top:744px;color:#b0b0b0;font-size:10px;letter-spacing:-0.35px;">.</div>
<div class="t" style="left:140px;top:744px;color:#a8a8a8;font-size:11px;letter-spacing:-1.10px;">Layer Name</div>
<div class="t" style="left:735px;top:744px;color:#a8a8a8;font-size:11px;letter-spacing:-1.00px;">Parent &amp; Link</div>
<svg style="left:596px;top:746px;" width="14" height="12" viewBox="0 0 14 12"><path d="M2.500 7a4.500 4.500 0 0 1 9 0z" fill="none" stroke="#c4c4c4" stroke-width="1.200"/><path d="M7 3v6M0.500 7.200h13M3 10h3M8 10h3" stroke="#c4c4c4" stroke-width="1.100"/></svg>
<svg style="left:612px;top:746px;" width="12" height="12" viewBox="0 0 12 12"><circle cx="6" cy="6" r="1.800" fill="none" stroke="#c4c4c4" stroke-width="1"/><path d="M6 0.500v2.500M6 9v2.500M0.500 6h2.500M9 6h2.500M2.200 2.200l1.700 1.700M8.100 8.100l1.700 1.700M9.800 2.200L8.100 3.900M3.900 8.100L2.200 9.800" stroke="#c4c4c4" stroke-width="1"/></svg>
<svg style="left:627px;top:746px;" width="12" height="12" viewBox="0 0 12 12"><path d="M1.500 1.500L10.500 10.500" stroke="#c4c4c4" stroke-width="1.300" stroke-dasharray="2 1"/></svg>
<div class="t" style="left:642px;top:744px;font-size:13.500px;font-style:italic;color:#c4c4c4;letter-spacing:-0.800px">fx</div>
<svg style="left:656px;top:746px;" width="14" height="12" viewBox="0 0 14 12"><path d="M1 3v8h9" fill="none" stroke="#c4c4c4" stroke-width="1.200"/><rect x="3" y="1" width="10" height="9" fill="#c4c4c4"/><rect x="5" y="2.500" width="6" height="2.500" fill="#323232"/><rect x="5" y="6" width="6" height="2.500" fill="#323232"/></svg>
<svg style="left:671px;top:745px;" width="15" height="14" viewBox="0 0 15 14"><ellipse cx="6" cy="9" rx="5" ry="3.500" fill="none" stroke="#c4c4c4" stroke-width="1.100"/><ellipse cx="7" cy="7.500" rx="5" ry="3.500" fill="#323232" stroke="#c4c4c4" stroke-width="1.100"/><ellipse cx="8.500" cy="5.500" rx="5.500" ry="4" fill="#909090"/></svg>
<svg style="left:687px;top:746px;" width="12" height="12" viewBox="0 0 12 12"><circle cx="6" cy="6" r="5" fill="#c4c4c4"/><path d="M6 1a5 5 0 0 0-3.540 8.540z" fill="#323232"/></svg>
<svg style="left:702px;top:746px;" width="12" height="12" viewBox="0 0 12 12"><path d="M6 1l4.500 2.500v5L6 11 1.500 8.500v-5zM1.500 3.500L6 6l4.500-2.500M6 6v5" fill="none" stroke="#c4c4c4" stroke-width="1.100"/></svg>
<div style="left:3px;top:762px;width:925px;height:17px;background:#303030;"></div>
<div style="left:3px;top:778px;width:925px;height:1px;background:#252525;"></div>
<div style="left:4px;top:762px;width:18px;height:16px;background:#242424;"></div>
<svg style="left:5px;top:765px;" width="14" height="10" viewBox="0 0 14 10"><path d="M0.500 5C3 1.200 11 1.200 13.500 5 11 8.800 3 8.800 0.500 5z" fill="#c4c4c4"/><circle cx="7" cy="5" r="2.300" fill="#222"/><circle cx="7" cy="5" r="1" fill="#c4c4c4"/></svg>
<div style="left:36px;top:763px;width:12px;height:14px;background:#222222;"></div>
<div style="left:51px;top:763px;width:12px;height:14px;background:#222222;"></div>
<svg style="left:74px;top:767px;" width="10" height="7" viewBox="0 0 10 7"><path d="M1 1l4 4 4-4" fill="none" stroke="#8c8c8c" stroke-width="1.300"/></svg>
<div style="left:87px;top:764px;width:12px;height:12px;background:#b3addd;"></div>
<div class="t" style="left:108px;top:762px;color:#c0c0c0;font-size:12px;letter-spacing:-0.42px;">1</div>
<svg style="left:139px;top:763px;" width="10" height="14" viewBox="0 0 10 14"><path d="M0.500 0.500h6.500l2.500 2.500v10.500h-9z" fill="#1c3f73" stroke="#5d8fd0" stroke-width="1"/><rect x="2" y="9.500" width="5" height="2.500" fill="#d8d8d8"/></svg>
<div class="t" style="left:140.500px;top:765px;font-size:5.500px;line-height:6px;height:6px;color:#cfe0ff;font-weight:bold">Ps</div>
<div class="t" style="left:157px;top:762px;color:#cacaca;font-size:12px;letter-spacing:-0.22px;">[Scene_02b.psd]</div>
<div style="left:597px;top:763px;width:13px;height:14px;background:#252525;"></div>
<div style="left:672px;top:763px;width:13px;height:14px;background:#252525;"></div>
<div style="left:687px;top:763px;width:13px;height:14px;background:#252525;"></div>
<div style="left:702px;top:763px;width:13px;height:14px;background:#252525;"></div>
<svg style="left:596px;top:764px;" width="14" height="12" viewBox="0 0 14 12"><path d="M2.500 7a4.500 4.500 0 0 1 9 0z" fill="none" stroke="#c8c8c8" stroke-width="1.200"/><path d="M7 3v6M0.500 7.200h13M3 10h3M8 10h3" stroke="#c8c8c8" stroke-width="1.100"/></svg>
<div style="left:626px;top:763px;width:14px;height:14px;background:#252525;"></div>
<svg style="left:627px;top:764px;" width="12" height="12" viewBox="0 0 12 12"><path d="M1.500 10.500L10.500 1.500" stroke="#c8c8c8" stroke-width="1.300"/></svg>
<div style="left:641px;top:763px;width:14px;height:14px;background:#252525;"></div>
<div class="t" style="left:642px;top:762px;font-size:13.500px;font-style:italic;color:#c8c8c8;letter-spacing:-0.800px">fx</div>
<svg style="left:733px;top:763px;" width="14" height="14" viewBox="0 0 14 14"><path d="M7.0 6.2L7.4 6.1L7.9 6.2L8.3 6.6L8.5 7.1L8.5 7.8L8.2 8.5L7.5 9.0L6.6 9.2L5.6 9.0L4.8 8.4L4.2 7.4L4.1 6.2L4.5 5.0L5.5 4.0L6.8 3.4L8.3 3.5L9.8 4.2L10.8 5.5L11.3 7.1L11.1 9.0L10.1 10.6L8.4 11.7L6.4 12.0L4.3 11.5L2.6 10.1L1.5 8.1L1.3 5.8L2.1 3.5" fill="none" stroke="#a8a8a8" stroke-width="1.250" stroke-linejoin="round"/></svg>
<div style="left:752px;top:762px;width:155px;height:16px;background:#222222;"></div>
<div class="t" style="left:760px;top:762px;color:#cfcfcf;font-size:12px;letter-spacing:-0.90px;">None</div>
<svg style="left:894px;top:767px;" width="9" height="6" viewBox="0 0 9 6"><path d="M1 1l3.500 3.500L8 1" fill="none" stroke="#b0b0b0" stroke-width="1.300"/></svg>
<div style="left:3px;top:779px;width:925px;height:17px;background:#262626;"></div>
<div style="left:3px;top:795px;width:925px;height:1px;background:#222222;"></div>
<svg style="left:91.5px;top:782px;" width="7" height="10" viewBox="0 0 7 10"><path d="M1.500 1l4 4-4 4" fill="none" stroke="#8c8c8c" stroke-width="1.300"/></svg>
<div class="t" style="left:109px;top:780px;color:#c0c0c0;font-size:12px;letter-spacing:-0.74px;">Effects</div>
<div style="left:3px;top:796px;width:925px;height:17px;background:#262626;"></div>
<div style="left:3px;top:812px;width:925px;height:1px;background:#222222;"></div>
<div class="t" style="left:142px;top:797px;color:#c0c0c0;font-size:12px;letter-spacing:-1.00px;">Scale</div>
<svg style="left:122px;top:797px;" width="12" height="14" viewBox="0 0 12 14"><circle cx="6" cy="8" r="4.700" fill="none" stroke="#c8c8c8" stroke-width="1.300"/><path d="M4.500 1.500h3M6 1.500v2" stroke="#c8c8c8" stroke-width="1.300"/></svg>
<svg style="left:597px;top:799px;" width="13" height="9" viewBox="0 0 13 9"><rect x="0.700" y="2" width="7" height="5" rx="2.500" fill="none" stroke="#c8c8c8" stroke-width="1.300"/><rect x="5.300" y="2" width="7" height="5" rx="2.500" fill="none" stroke="#c8c8c8" stroke-width="1.300"/></svg>
<div class="t" style="left:615px;top:796px;color:#4a8fdd;font-size:12px;letter-spacing:-0.78px;">70,0</div>
<div class="t" style="left:638px;top:797px;color:#c0c0c0;font-size:12px;letter-spacing:-0.42px;">,</div>
<div class="t" style="left:641px;top:796px;color:#4a8fdd;font-size:12px;letter-spacing:-0.78px;">70,0</div>
<div class="t" style="left:662px;top:796px;color:#b0b0b0;font-size:11px;letter-spacing:-0.39px;">%</div>
<svg style="left:746px;top:796px;" width="14" height="14" viewBox="0 0 14 14"><path d="M7.0 6.2L7.4 6.1L7.9 6.2L8.3 6.6L8.5 7.1L8.5 7.8L8.2 8.5L7.5 9.0L6.6 9.2L5.6 9.0L4.8 8.4L4.2 7.4L4.1 6.2L4.5 5.0L5.5 4.0L6.8 3.4L8.3 3.5L9.8 4.2L10.8 5.5L11.3 7.1L11.1 9.0L10.1 10.6L8.4 11.7L6.4 12.0L4.3 11.5L2.6 10.1L1.5 8.1L1.3 5.8L2.1 3.5" fill="none" stroke="#a8a8a8" stroke-width="1.250" stroke-linejoin="round"/></svg>
<div style="left:3px;top:813px;width:925px;height:17px;background:#484848;"></div>
<div style="left:3px;top:829px;width:925px;height:1px;background:#3d3d3d;"></div>
<div style="left:4px;top:813px;width:18px;height:16px;background:#3a3a3a;"></div>
<svg style="left:5px;top:816px;" width="14" height="10" viewBox="0 0 14 10"><path d="M0.500 5C3 1.200 11 1.200 13.500 5 11 8.800 3 8.800 0.500 5z" fill="#c4c4c4"/><circle cx="7" cy="5" r="2.300" fill="#222"/><circle cx="7" cy="5" r="1" fill="#c4c4c4"/></svg>
<div style="left:36px;top:814px;width:12px;height:14px;background:#383838;"></div>
<div style="left:51px;top:814px;width:12px;height:14px;background:#383838;"></div>
<svg style="left:74px;top:818px;" width="10" height="7" viewBox="0 0 10 7"><path d="M1 1l4 4 4-4" fill="none" stroke="#8c8c8c" stroke-width="1.300"/></svg>
<div style="left:87px;top:815px;width:12px;height:12px;background:#7b7fe8;"></div>
<div class="t" style="left:108px;top:813px;color:#c0c0c0;font-size:12px;letter-spacing:-0.42px;">2</div>
<svg style="left:137px;top:815px;" width="12" height="12" viewBox="0 0 12 12"><path d="M6 0.500l1.700 3.700 4 .4-3 2.700.9 4L6 9.200 2.400 11.300l.9-4-3-2.700 4-.4z" fill="#d0d0d0"/></svg>
<div style="left:153px;top:813px;width:440px;height:16px;background:#565656;border:1.500px solid #c2c2c2"></div>
<div class="t" style="left:157px;top:813px;color:#e6e6e6;font-size:12px;letter-spacing:-0.50px;">Shape Layer 1</div>
<div style="left:597px;top:814px;width:13px;height:14px;background:#404040;"></div>
<div style="left:672px;top:814px;width:13px;height:14px;background:#404040;"></div>
<div style="left:687px;top:814px;width:13px;height:14px;background:#404040;"></div>
<div style="left:702px;top:814px;width:13px;height:14px;background:#404040;"></div>
<svg style="left:596px;top:815px;" width="14" height="12" viewBox="0 0 14 12"><path d="M2.500 7a4.500 4.500 0 0 1 9 0z" fill="none" stroke="#c8c8c8" stroke-width="1.200"/><path d="M7 3v6M0.500 7.200h13M3 10h3M8 10h3" stroke="#c8c8c8" stroke-width="1.100"/></svg>
<div style="left:611px;top:814px;width:14px;height:14px;background:#3c3c3c;"></div>
<svg style="left:612px;top:815px;" width="12" height="12" viewBox="0 0 12 12"><circle cx="6" cy="6" r="1.800" fill="none" stroke="#7d7d7d" stroke-width="1"/><path d="M6 0.500v2.500M6 9v2.500M0.500 6h2.500M9 6h2.500M2.200 2.200l1.700 1.700M8.100 8.100l1.700 1.700M9.800 2.200L8.100 3.900M3.900 8.100L2.200 9.800" stroke="#7d7d7d" stroke-width="1"/></svg>
<div style="left:626px;top:814px;width:14px;height:14px;background:#3c3c3c;"></div>
<svg style="left:627px;top:815px;" width="12" height="12" viewBox="0 0 12 12"><path d="M1.500 10.500L10.500 1.500" stroke="#c8c8c8" stroke-width="1.300"/></svg>
<svg style="left:733px;top:814px;" width="14" height="14" viewBox="0 0 14 14"><path d="M7.0 6.2L7.4 6.1L7.9 6.2L8.3 6.6L8.5 7.1L8.5 7.8L8.2 8.5L7.5 9.0L6.6 9.2L5.6 9.0L4.8 8.4L4.2 7.4L4.1 6.2L4.5 5.0L5.5 4.0L6.8 3.4L8.3 3.5L9.8 4.2L10.8 5.5L11.3 7.1L11.1 9.0L10.1 10.6L8.4 11.7L6.4 12.0L4.3 11.5L2.6 10.1L1.5 8.1L1.3 5.8L2.1 3.5" fill="none" stroke="#a8a8a8" stroke-width="1.250" stroke-linejoin="round"/></svg>
<div style="left:752px;top:813px;width:155px;height:16px;background:#222222;"></div>
<div class="t" style="left:760px;top:813px;color:#cfcfcf;font-size:12px;letter-spacing:-0.90px;">None</div>
<svg style="left:894px;top:818px;" width="9" height="6" viewBox="0 0 9 6"><path d="M1 1l3.500 3.500L8 1" fill="none" stroke="#b0b0b0" stroke-width="1.300"/></svg>
<div style="left:3px;top:830px;width:925px;height:17px;background:#262626;"></div>
<div style="left:3px;top:846px;width:925px;height:1px;background:#222222;"></div>
<svg style="left:91px;top:835px;" width="10" height="7" viewBox="0 0 10 7"><path d="M1 1l4 4 4-4" fill="none" stroke="#8c8c8c" stroke-width="1.300"/></svg>
<div class="t" style="left:109px;top:831px;color:#c0c0c0;font-size:12px;letter-spacing:-0.58px;">Contents</div>
<div class="t" style="left:686px;top:831px;color:#b8b8b8;font-size:12px;letter-spacing:-1.23px;">Add:</div>
<svg style="left:712px;top:832px;" width="12" height="12" viewBox="0 0 12 12"><circle cx="6" cy="6" r="5.500" fill="#dadada"/><path d="M4.500 3l4 3-4 3z" fill="#262626"/></svg>
<div style="left:3px;top:847px;width:925px;height:17px;background:#262626;"></div>
<div style="left:3px;top:863px;width:925px;height:1px;background:#222222;"></div>
<div style="left:4px;top:847px;width:18px;height:16px;background:#202020;"></div>
<svg style="left:6px;top:850px;" width="14" height="10" viewBox="0 0 14 10"><path d="M0.500 5C3 1.200 11 1.200 13.500 5 11 8.800 3 8.800 0.500 5z" fill="#d8d8d8"/><circle cx="7" cy="5" r="2.300" fill="#222"/><circle cx="7" cy="5" r="1" fill="#d8d8d8"/></svg>
<svg style="left:108.5px;top:850px;" width="7" height="10" viewBox="0 0 7 10"><path d="M1.500 1l4 4-4 4" fill="none" stroke="#8c8c8c" stroke-width="1.300"/></svg>
<div class="t" style="left:126px;top:848px;color:#c0c0c0;font-size:12px;letter-spacing:-0.60px;">Rectangle 3</div>
<div style="left:598px;top:847px;width:126px;height:16px;background:#1e1e1e;border:1px solid #2e2e2e"></div>
<div class="t" style="left:605px;top:847px;color:#d0d0d0;font-size:12px;letter-spacing:-0.33px;">Normal</div>
<svg style="left:711px;top:852px;" width="9" height="6" viewBox="0 0 9 6"><path d="M1 1l3.500 3.500L8 1" fill="none" stroke="#b0b0b0" stroke-width="1.300"/></svg>
<div style="left:3px;top:864px;width:925px;height:17px;background:#262626;"></div>
<div style="left:3px;top:880px;width:925px;height:1px;background:#222222;"></div>
<div style="left:4px;top:864px;width:18px;height:16px;background:#202020;"></div>
<svg style="left:6px;top:867px;" width="14" height="10" viewBox="0 0 14 10"><path d="M0.500 5C3 1.200 11 1.200 13.500 5 11 8.800 3 8.800 0.500 5z" fill="#d8d8d8"/><circle cx="7" cy="5" r="2.300" fill="#222"/><circle cx="7" cy="5" r="1" fill="#d8d8d8"/></svg>
<div style="left:122px;top:864px;width:471px;height:16px;background:#494949;"></div>
<svg style="left:108.5px;top:867px;" width="7" height="10" viewBox="0 0 7 10"><path d="M1.500 1l4 4-4 4" fill="none" stroke="#8c8c8c" stroke-width="1.300"/></svg>
<div class="t" style="left:126px;top:865px;color:#c0c0c0;font-size:12px;letter-spacing:-0.60px;">Rectangle 2</div>
<div style="left:598px;top:864px;width:126px;height:16px;background:#1e1e1e;border:1px solid #2e2e2e"></div>
<div class="t" style="left:605px;top:864px;color:#d0d0d0;font-size:12px;letter-spacing:-0.33px;">Normal</div>
<svg style="left:711px;top:869px;" width="9" height="6" viewBox="0 0 9 6"><path d="M1 1l3.500 3.500L8 1" fill="none" stroke="#b0b0b0" stroke-width="1.300"/></svg>
<div style="left:3px;top:881px;width:925px;height:17px;background:#262626;"></div>
<div style="left:3px;top:897px;width:925px;height:1px;background:#222222;"></div>
<div style="left:4px;top:881px;width:18px;height:16px;background:#202020;"></div>
<svg style="left:6px;top:884px;" width="14" height="10" viewBox="0 0 14 10"><path d="M0.500 5C3 1.200 11 1.200 13.500 5 11 8.800 3 8.800 0.500 5z" fill="#d8d8d8"/><circle cx="7" cy="5" r="2.300" fill="#222"/><circle cx="7" cy="5" r="1" fill="#d8d8d8"/></svg>
<svg style="left:108.5px;top:884px;" width="7" height="10" viewBox="0 0 7 10"><path d="M1.500 1l4 4-4 4" fill="none" stroke="#8c8c8c" stroke-width="1.300"/></svg>
<div class="t" style="left:126px;top:882px;color:#c0c0c0;font-size:12px;letter-spacing:-0.60px;">Rectangle 1</div>
<div style="left:598px;top:881px;width:126px;height:16px;background:#1e1e1e;border:1px solid #2e2e2e"></div>
<div class="t" style="left:605px;top:881px;color:#d0d0d0;font-size:12px;letter-spacing:-0.33px;">Normal</div>
<svg style="left:711px;top:886px;" width="9" height="6" viewBox="0 0 9 6"><path d="M1 1l3.500 3.500L8 1" fill="none" stroke="#b0b0b0" stroke-width="1.300"/></svg>
<div style="left:3px;top:898px;width:925px;height:17px;background:#262626;"></div>
<div style="left:3px;top:914px;width:925px;height:1px;background:#222222;"></div>
<svg style="left:91.5px;top:901px;" width="7" height="10" viewBox="0 0 7 10"><path d="M1.500 1l4 4-4 4" fill="none" stroke="#8c8c8c" stroke-width="1.300"/></svg>
<div class="t" style="left:109px;top:899px;color:#c0c0c0;font-size:12px;letter-spacing:-0.65px;">Transform</div>
<div class="t" style="left:598px;top:898px;color:#4a8fdd;font-size:12px;letter-spacing:-0.84px;">Reset</div>
<div style="left:3px;top:915px;width:925px;height:17px;background:#303030;"></div>
<div style="left:3px;top:931px;width:925px;height:1px;background:#252525;"></div>
<div style="left:4px;top:915px;width:18px;height:16px;background:#242424;"></div>
<svg style="left:5px;top:918px;" width="14" height="10" viewBox="0 0 14 10"><path d="M0.500 5C3 1.200 11 1.200 13.500 5 11 8.800 3 8.800 0.500 5z" fill="#c4c4c4"/><circle cx="7" cy="5" r="2.300" fill="#222"/><circle cx="7" cy="5" r="1" fill="#c4c4c4"/></svg>
<div style="left:36px;top:916px;width:12px;height:14px;background:#222222;"></div>
<div style="left:51px;top:916px;width:12px;height:14px;background:#222222;"></div>
<svg style="left:75px;top:918px;" width="7" height="10" viewBox="0 0 7 10"><path d="M1.500 1l4 4-4 4" fill="none" stroke="#8c8c8c" stroke-width="1.300"/></svg>
<div style="left:87px;top:917px;width:12px;height:12px;background:#7b7fe8;"></div>
<div class="t" style="left:108px;top:915px;color:#c0c0c0;font-size:12px;letter-spacing:-0.42px;">3</div>
<svg style="left:137px;top:917px;" width="12" height="12" viewBox="0 0 12 12"><path d="M6 0.500l1.700 3.700 4 .4-3 2.700.9 4L6 9.200 2.400 11.300l.9-4-3-2.700 4-.4z" fill="#d0d0d0"/></svg>
<svg style="left:152.5px;top:917px;" width="11" height="12" viewBox="0 0 11 12"><path d="M3.300 0.500v11M7.900 0.500v11M0.500 3.500h10M0.500 8.300h10" stroke="#5fcfb4" stroke-width="1.150"/></svg>
<div class="t" style="left:173px;top:915px;color:#cdcdcd;font-size:12px;letter-spacing:-0.16px;-webkit-text-stroke:0.350px #cdcdcd;">Front Left Panel</div>
<div style="left:597px;top:916px;width:13px;height:14px;background:#252525;"></div>
<div style="left:672px;top:916px;width:13px;height:14px;background:#252525;"></div>
<div style="left:687px;top:916px;width:13px;height:14px;background:#252525;"></div>
<div style="left:702px;top:916px;width:13px;height:14px;background:#252525;"></div>
<svg style="left:596px;top:917px;" width="14" height="12" viewBox="0 0 14 12"><path d="M2.500 7a4.500 4.500 0 0 1 9 0z" fill="none" stroke="#c8c8c8" stroke-width="1.200"/><path d="M7 3v6M0.500 7.200h13M3 10h3M8 10h3" stroke="#c8c8c8" stroke-width="1.100"/></svg>
<svg style="left:612px;top:917px;" width="12" height="12" viewBox="0 0 12 12"><circle cx="6" cy="6" r="1.800" fill="none" stroke="#7d7d7d" stroke-width="1"/><path d="M6 0.500v2.500M6 9v2.500M0.500 6h2.500M9 6h2.500M2.200 2.200l1.700 1.700M8.100 8.100l1.700 1.700M9.800 2.200L8.100 3.900M3.900 8.100L2.200 9.800" stroke="#7d7d7d" stroke-width="1"/></svg>
<svg style="left:627px;top:917px;" width="12" height="12" viewBox="0 0 12 12"><path d="M1.500 10.500L10.500 1.500" stroke="#c8c8c8" stroke-width="1.300"/></svg>
<svg style="left:733px;top:916px;" width="14" height="14" viewBox="0 0 14 14"><path d="M7.0 6.2L7.4 6.1L7.9 6.2L8.3 6.6L8.5 7.1L8.5 7.8L8.2 8.5L7.5 9.0L6.6 9.2L5.6 9.0L4.8 8.4L4.2 7.4L4.1 6.2L4.5 5.0L5.5 4.0L6.8 3.4L8.3 3.5L9.8 4.2L10.8 5.5L11.3 7.1L11.1 9.0L10.1 10.6L8.4 11.7L6.4 12.0L4.3 11.5L2.6 10.1L1.5 8.1L1.3 5.8L2.1 3.5" fill="none" stroke="#a8a8a8" stroke-width="1.250" stroke-linejoin="round"/></svg>
<div style="left:752px;top:915px;width:155px;height:16px;background:#222222;"></div>
<div class="t" style="left:760px;top:915px;color:#cfcfcf;font-size:12px;letter-spacing:-0.90px;">None</div>
<svg style="left:894px;top:920px;" width="9" height="6" viewBox="0 0 9 6"><path d="M1 1l3.500 3.500L8 1" fill="none" stroke="#b0b0b0" stroke-width="1.300"/></svg>
<div style="left:3px;top:932px;width:925px;height:17px;background:#303030;"></div>
<div style="left:3px;top:948px;width:925px;height:1px;background:#252525;"></div>
<div style="left:4px;top:932px;width:18px;height:16px;background:#242424;"></div>
<svg style="left:5px;top:935px;" width="14" height="10" viewBox="0 0 14 10"><path d="M0.500 5C3 1.200 11 1.200 13.500 5 11 8.800 3 8.800 0.500 5z" fill="#c4c4c4"/><circle cx="7" cy="5" r="2.300" fill="#222"/><circle cx="7" cy="5" r="1" fill="#c4c4c4"/></svg>
<div style="left:36px;top:933px;width:12px;height:14px;background:#222222;"></div>
<div style="left:51px;top:933px;width:12px;height:14px;background:#222222;"></div>
<svg style="left:75px;top:935px;" width="7" height="10" viewBox="0 0 7 10"><path d="M1.500 1l4 4-4 4" fill="none" stroke="#8c8c8c" stroke-width="1.300"/></svg>
<div style="left:87px;top:934px;width:12px;height:12px;background:#7b7fe8;"></div>
<div class="t" style="left:108px;top:932px;color:#c0c0c0;font-size:12px;letter-spacing:-0.42px;">4</div>
<svg style="left:137px;top:934px;" width="12" height="12" viewBox="0 0 12 12"><path d="M6 0.500l1.700 3.700 4 .4-3 2.700.9 4L6 9.200 2.400 11.300l.9-4-3-2.700 4-.4z" fill="#d0d0d0"/></svg>
<svg style="left:152.5px;top:934px;" width="11" height="12" viewBox="0 0 11 12"><path d="M3.300 0.500v11M7.900 0.500v11M0.500 3.500h10M0.500 8.300h10" stroke="#5fcfb4" stroke-width="1.150"/></svg>
<div class="t" style="left:173px;top:932px;color:#cdcdcd;font-size:12px;letter-spacing:-0.21px;-webkit-text-stroke:0.350px #cdcdcd;">Front Right Panel</div>
<div style="left:597px;top:933px;width:13px;height:14px;background:#252525;"></div>
<div style="left:672px;top:933px;width:13px;height:14px;background:#252525;"></div>
<div style="left:687px;top:933px;width:13px;height:14px;background:#252525;"></div>
<div style="left:702px;top:933px;width:13px;height:14px;background:#252525;"></div>
<svg style="left:596px;top:934px;" width="14" height="12" viewBox="0 0 14 12"><path d="M2.500 7a4.500 4.500 0 0 1 9 0z" fill="none" stroke="#c8c8c8" stroke-width="1.200"/><path d="M7 3v6M0.500 7.200h13M3 10h3M8 10h3" stroke="#c8c8c8" stroke-width="1.100"/></svg>
<svg style="left:612px;top:934px;" width="12" height="12" viewBox="0 0 12 12"><circle cx="6" cy="6" r="1.800" fill="none" stroke="#7d7d7d" stroke-width="1"/><path d="M6 0.500v2.500M6 9v2.500M0.500 6h2.500M9 6h2.500M2.200 2.200l1.700 1.700M8.100 8.100l1.700 1.700M9.800 2.200L8.100 3.900M3.900 8.100L2.200 9.800" stroke="#7d7d7d" stroke-width="1"/></svg>
<svg style="left:627px;top:934px;" width="12" height="12" viewBox="0 0 12 12"><path d="M1.500 10.500L10.500 1.500" stroke="#c8c8c8" stroke-width="1.300"/></svg>
<svg style="left:733px;top:933px;" width="14" height="14" viewBox="0 0 14 14"><path d="M7.0 6.2L7.4 6.1L7.9 6.2L8.3 6.6L8.5 7.1L8.5 7.8L8.2 8.5L7.5 9.0L6.6 9.2L5.6 9.0L4.8 8.4L4.2 7.4L4.1 6.2L4.5 5.0L5.5 4.0L6.8 3.4L8.3 3.5L9.8 4.2L10.8 5.5L11.3 7.1L11.1 9.0L10.1 10.6L8.4 11.7L6.4 12.0L4.3 11.5L2.6 10.1L1.5 8.1L1.3 5.8L2.1 3.5" fill="none" stroke="#a8a8a8" stroke-width="1.250" stroke-linejoin="round"/></svg>
<div style="left:752px;top:932px;width:155px;height:16px;background:#222222;"></div>
<div class="t" style="left:760px;top:932px;color:#cfcfcf;font-size:12px;letter-spacing:-0.90px;">None</div>
<svg style="left:894px;top:937px;" width="9" height="6" viewBox="0 0 9 6"><path d="M1 1l3.500 3.500L8 1" fill="none" stroke="#b0b0b0" stroke-width="1.300"/></svg>
<div style="left:3px;top:949px;width:925px;height:17px;background:#303030;"></div>
<div style="left:3px;top:965px;width:925px;height:1px;background:#252525;"></div>
<div style="left:4px;top:949px;width:18px;height:16px;background:#242424;"></div>
<svg style="left:5px;top:952px;" width="14" height="10" viewBox="0 0 14 10"><path d="M0.500 5C3 1.200 11 1.200 13.500 5 11 8.800 3 8.800 0.500 5z" fill="#c4c4c4"/><circle cx="7" cy="5" r="2.300" fill="#222"/><circle cx="7" cy="5" r="1" fill="#c4c4c4"/></svg>
<div style="left:36px;top:950px;width:12px;height:14px;background:#222222;"></div>
<div style="left:51px;top:950px;width:12px;height:14px;background:#222222;"></div>
<svg style="left:75px;top:952px;" width="7" height="10" viewBox="0 0 7 10"><path d="M1.500 1l4 4-4 4" fill="none" stroke="#8c8c8c" stroke-width="1.300"/></svg>
<div style="left:87px;top:951px;width:12px;height:12px;background:#7b7fe8;"></div>
<div class="t" style="left:108px;top:949px;color:#c0c0c0;font-size:12px;letter-spacing:-0.42px;">5</div>
<svg style="left:137px;top:951px;" width="12" height="12" viewBox="0 0 12 12"><path d="M6 0.500l1.700 3.700 4 .4-3 2.700.9 4L6 9.200 2.400 11.300l.9-4-3-2.700 4-.4z" fill="#d0d0d0"/></svg>
<svg style="left:152.5px;top:951px;" width="11" height="12" viewBox="0 0 11 12"><path d="M3.300 0.500v11M7.900 0.500v11M0.500 3.500h10M0.500 8.300h10" stroke="#5fcfb4" stroke-width="1.150"/></svg>
<div class="t" style="left:173px;top:949px;color:#cdcdcd;font-size:12px;letter-spacing:-0.23px;-webkit-text-stroke:0.350px #cdcdcd;">Left Panel</div>
<div style="left:597px;top:950px;width:13px;height:14px;background:#252525;"></div>
<div style="left:672px;top:950px;width:13px;height:14px;background:#252525;"></div>
<div style="left:687px;top:950px;width:13px;height:14px;background:#252525;"></div>
<div style="left:702px;top:950px;width:13px;height:14px;background:#252525;"></div>
<svg style="left:596px;top:951px;" width="14" height="12" viewBox="0 0 14 12"><path d="M2.500 7a4.500 4.500 0 0 1 9 0z" fill="none" stroke="#c8c8c8" stroke-width="1.200"/><path d="M7 3v6M0.500 7.200h13M3 10h3M8 10h3" stroke="#c8c8c8" stroke-width="1.100"/></svg>
<svg style="left:612px;top:951px;" width="12" height="12" viewBox="0 0 12 12"><circle cx="6" cy="6" r="1.800" fill="none" stroke="#7d7d7d" stroke-width="1"/><path d="M6 0.500v2.500M6 9v2.500M0.500 6h2.500M9 6h2.500M2.200 2.200l1.700 1.700M8.100 8.100l1.700 1.700M9.800 2.200L8.100 3.900M3.900 8.100L2.200 9.800" stroke="#7d7d7d" stroke-width="1"/></svg>
<svg style="left:627px;top:951px;" width="12" height="12" viewBox="0 0 12 12"><path d="M1.500 10.500L10.500 1.500" stroke="#c8c8c8" stroke-width="1.300"/></svg>
<svg style="left:733px;top:950px;" width="14" height="14" viewBox="0 0 14 14"><path d="M7.0 6.2L7.4 6.1L7.9 6.2L8.3 6.6L8.5 7.1L8.5 7.8L8.2 8.5L7.5 9.0L6.6 9.2L5.6 9.0L4.8 8.4L4.2 7.4L4.1 6.2L4.5 5.0L5.5 4.0L6.8 3.4L8.3 3.5L9.8 4.2L10.8 5.5L11.3 7.1L11.1 9.0L10.1 10.6L8.4 11.7L6.4 12.0L4.3 11.5L2.6 10.1L1.5 8.1L1.3 5.8L2.1 3.5" fill="none" stroke="#a8a8a8" stroke-width="1.250" stroke-linejoin="round"/></svg>
<div style="left:752px;top:949px;width:155px;height:16px;background:#222222;"></div>
<div class="t" style="left:760px;top:949px;color:#cfcfcf;font-size:12px;letter-spacing:-0.90px;">None</div>
<svg style="left:894px;top:954px;" width="9" height="6" viewBox="0 0 9 6"><path d="M1 1l3.500 3.500L8 1" fill="none" stroke="#b0b0b0" stroke-width="1.300"/></svg>
<div style="left:3px;top:966px;width:925px;height:17px;background:#303030;"></div>
<div style="left:3px;top:982px;width:925px;height:1px;background:#252525;"></div>
<div style="left:4px;top:966px;width:18px;height:16px;background:#242424;"></div>
<svg style="left:5px;top:969px;" width="14" height="10" viewBox="0 0 14 10"><path d="M0.500 5C3 1.200 11 1.200 13.500 5 11 8.800 3 8.800 0.500 5z" fill="#c4c4c4"/><circle cx="7" cy="5" r="2.300" fill="#222"/><circle cx="7" cy="5" r="1" fill="#c4c4c4"/></svg>
<div style="left:36px;top:967px;width:12px;height:14px;background:#222222;"></div>
<div style="left:51px;top:967px;width:12px;height:14px;background:#222222;"></div>
<svg style="left:75px;top:969px;" width="7" height="10" viewBox="0 0 7 10"><path d="M1.500 1l4 4-4 4" fill="none" stroke="#8c8c8c" stroke-width="1.300"/></svg>
<div style="left:87px;top:968px;width:12px;height:12px;background:#7b7fe8;"></div>
<div class="t" style="left:108px;top:966px;color:#c0c0c0;font-size:12px;letter-spacing:-0.42px;">6</div>
<svg style="left:137px;top:968px;" width="12" height="12" viewBox="0 0 12 12"><path d="M6 0.500l1.700 3.700 4 .4-3 2.700.9 4L6 9.200 2.400 11.300l.9-4-3-2.700 4-.4z" fill="#d0d0d0"/></svg>
<svg style="left:152.5px;top:968px;" width="11" height="12" viewBox="0 0 11 12"><path d="M3.300 0.500v11M7.900 0.500v11M0.500 3.500h10M0.500 8.300h10" stroke="#5fcfb4" stroke-width="1.150"/></svg>
<div class="t" style="left:173px;top:966px;color:#cdcdcd;font-size:12px;letter-spacing:-0.30px;-webkit-text-stroke:0.350px #cdcdcd;">Right Panel</div>
<div style="left:597px;top:967px;width:13px;height:14px;background:#252525;"></div>
<div style="left:672px;top:967px;width:13px;height:14px;background:#252525;"></div>
<div style="left:687px;top:967px;width:13px;height:14px;background:#252525;"></div>
<div style="left:702px;top:967px;width:13px;height:14px;background:#252525;"></div>
<svg style="left:596px;top:968px;" width="14" height="12" viewBox="0 0 14 12"><path d="M2.500 7a4.500 4.500 0 0 1 9 0z" fill="none" stroke="#c8c8c8" stroke-width="1.200"/><path d="M7 3v6M0.500 7.200h13M3 10h3M8 10h3" stroke="#c8c8c8" stroke-width="1.100"/></svg>
<svg style="left:612px;top:968px;" width="12" height="12" viewBox="0 0 12 12"><circle cx="6" cy="6" r="1.800" fill="none" stroke="#7d7d7d" stroke-width="1"/><path d="M6 0.500v2.500M6 9v2.500M0.500 6h2.500M9 6h2.500M2.200 2.200l1.700 1.700M8.100 8.100l1.700 1.700M9.800 2.200L8.100 3.900M3.900 8.100L2.200 9.800" stroke="#7d7d7d" stroke-width="1"/></svg>
<svg style="left:627px;top:968px;" width="12" height="12" viewBox="0 0 12 12"><path d="M1.500 10.500L10.500 1.500" stroke="#c8c8c8" stroke-width="1.300"/></svg>
<svg style="left:733px;top:967px;" width="14" height="14" viewBox="0 0 14 14"><path d="M7.0 6.2L7.4 6.1L7.9 6.2L8.3 6.6L8.5 7.1L8.5 7.8L8.2 8.5L7.5 9.0L6.6 9.2L5.6 9.0L4.8 8.4L4.2 7.4L4.1 6.2L4.5 5.0L5.5 4.0L6.8 3.4L8.3 3.5L9.8 4.2L10.8 5.5L11.3 7.1L11.1 9.0L10.1 10.6L8.4 11.7L6.4 12.0L4.3 11.5L2.6 10.1L1.5 8.1L1.3 5.8L2.1 3.5" fill="none" stroke="#a8a8a8" stroke-width="1.250" stroke-linejoin="round"/></svg>
<div style="left:752px;top:966px;width:155px;height:16px;background:#222222;"></div>
<div class="t" style="left:760px;top:966px;color:#cfcfcf;font-size:12px;letter-spacing:-0.90px;">None</div>
<svg style="left:894px;top:971px;" width="9" height="6" viewBox="0 0 9 6"><path d="M1 1l3.500 3.500L8 1" fill="none" stroke="#b0b0b0" stroke-width="1.300"/></svg>
<div style="left:3px;top:983px;width:925px;height:17px;background:#303030;"></div>
<div style="left:3px;top:999px;width:925px;height:1px;background:#252525;"></div>
<div style="left:4px;top:983px;width:18px;height:16px;background:#242424;"></div>
<svg style="left:5px;top:986px;" width="14" height="10" viewBox="0 0 14 10"><path d="M0.500 5C3 1.200 11 1.200 13.500 5 11 8.800 3 8.800 0.500 5z" fill="#c4c4c4"/><circle cx="7" cy="5" r="2.300" fill="#222"/><circle cx="7" cy="5" r="1" fill="#c4c4c4"/></svg>
<div style="left:36px;top:984px;width:12px;height:14px;background:#222222;"></div>
<div style="left:51px;top:984px;width:12px;height:14px;background:#222222;"></div>
<svg style="left:75px;top:986px;" width="7" height="10" viewBox="0 0 7 10"><path d="M1.500 1l4 4-4 4" fill="none" stroke="#8c8c8c" stroke-width="1.300"/></svg>
<div style="left:87px;top:985px;width:12px;height:12px;background:#7b7fe8;"></div>
<div class="t" style="left:108px;top:983px;color:#c0c0c0;font-size:12px;letter-spacing:-0.42px;">7</div>
<svg style="left:137px;top:985px;" width="12" height="12" viewBox="0 0 12 12"><path d="M6 0.500l1.700 3.700 4 .4-3 2.700.9 4L6 9.200 2.400 11.300l.9-4-3-2.700 4-.4z" fill="#d0d0d0"/></svg>
<svg style="left:152.5px;top:985px;" width="11" height="12" viewBox="0 0 11 12"><path d="M3.300 0.500v11M7.900 0.500v11M0.500 3.500h10M0.500 8.300h10" stroke="#5fcfb4" stroke-width="1.150"/></svg>
<div class="t" style="left:173px;top:983px;color:#cdcdcd;font-size:12px;letter-spacing:-0.20px;-webkit-text-stroke:0.350px #cdcdcd;">Right Grommet</div>
<div style="left:597px;top:984px;width:13px;height:14px;background:#252525;"></div>
<div style="left:672px;top:984px;width:13px;height:14px;background:#252525;"></div>
<div style="left:687px;top:984px;width:13px;height:14px;background:#252525;"></div>
<div style="left:702px;top:984px;width:13px;height:14px;background:#252525;"></div>
<svg style="left:596px;top:985px;" width="14" height="12" viewBox="0 0 14 12"><path d="M2.500 7a4.500 4.500 0 0 1 9 0z" fill="none" stroke="#c8c8c8" stroke-width="1.200"/><path d="M7 3v6M0.500 7.200h13M3 10h3M8 10h3" stroke="#c8c8c8" stroke-width="1.100"/></svg>
<svg style="left:612px;top:985px;" width="12" height="12" viewBox="0 0 12 12"><circle cx="6" cy="6" r="1.800" fill="none" stroke="#7d7d7d" stroke-width="1"/><path d="M6 0.500v2.500M6 9v2.500M0.500 6h2.500M9 6h2.500M2.200 2.200l1.700 1.700M8.100 8.100l1.700 1.700M9.800 2.200L8.100 3.900M3.900 8.100L2.200 9.800" stroke="#7d7d7d" stroke-width="1"/></svg>
<svg style="left:627px;top:985px;" width="12" height="12" viewBox="0 0 12 12"><path d="M1.500 10.500L10.500 1.500" stroke="#c8c8c8" stroke-width="1.300"/></svg>
<svg style="left:733px;top:984px;" width="14" height="14" viewBox="0 0 14 14"><path d="M7.0 6.2L7.4 6.1L7.9 6.2L8.3 6.6L8.5 7.1L8.5 7.8L8.2 8.5L7.5 9.0L6.6 9.2L5.6 9.0L4.8 8.4L4.2 7.4L4.1 6.2L4.5 5.0L5.5 4.0L6.8 3.4L8.3 3.5L9.8 4.2L10.8 5.5L11.3 7.1L11.1 9.0L10.1 10.6L8.4 11.7L6.4 12.0L4.3 11.5L2.6 10.1L1.5 8.1L1.3 5.8L2.1 3.5" fill="none" stroke="#a8a8a8" stroke-width="1.250" stroke-linejoin="round"/></svg>
<div style="left:752px;top:983px;width:155px;height:16px;background:#222222;"></div>
<div class="t" style="left:760px;top:983px;color:#cfcfcf;font-size:12px;letter-spacing:-0.90px;">None</div>
<svg style="left:894px;top:988px;" width="9" height="6" viewBox="0 0 9 6"><path d="M1 1l3.500 3.500L8 1" fill="none" stroke="#b0b0b0" stroke-width="1.300"/></svg>
<div style="left:3px;top:1000px;width:925px;height:17px;background:#303030;"></div>
<div style="left:3px;top:1016px;width:925px;height:1px;background:#252525;"></div>
<div style="left:4px;top:1000px;width:18px;height:16px;background:#242424;"></div>
<svg style="left:5px;top:1003px;" width="14" height="10" viewBox="0 0 14 10"><path d="M0.500 5C3 1.200 11 1.200 13.500 5 11 8.800 3 8.800 0.500 5z" fill="#c4c4c4"/><circle cx="7" cy="5" r="2.300" fill="#222"/><circle cx="7" cy="5" r="1" fill="#c4c4c4"/></svg>
<div style="left:36px;top:1001px;width:12px;height:14px;background:#222222;"></div>
<div style="left:51px;top:1001px;width:12px;height:14px;background:#222222;"></div>
<svg style="left:75px;top:1003px;" width="7" height="10" viewBox="0 0 7 10"><path d="M1.500 1l4 4-4 4" fill="none" stroke="#8c8c8c" stroke-width="1.300"/></svg>
<div style="left:87px;top:1002px;width:12px;height:12px;background:#7b7fe8;"></div>
<div class="t" style="left:108px;top:1000px;color:#c0c0c0;font-size:12px;letter-spacing:-0.42px;">8</div>
<svg style="left:137px;top:1002px;" width="12" height="12" viewBox="0 0 12 12"><path d="M6 0.500l1.700 3.700 4 .4-3 2.700.9 4L6 9.200 2.400 11.300l.9-4-3-2.700 4-.4z" fill="#d0d0d0"/></svg>
<svg style="left:152.5px;top:1002px;" width="11" height="12" viewBox="0 0 11 12"><path d="M3.300 0.500v11M7.900 0.500v11M0.500 3.500h10M0.500 8.300h10" stroke="#5fcfb4" stroke-width="1.150"/></svg>
<div class="t" style="left:173px;top:1000px;color:#cdcdcd;font-size:12px;letter-spacing:-0.12px;-webkit-text-stroke:0.350px #cdcdcd;">Left Grommet</div>
<div style="left:597px;top:1001px;width:13px;height:14px;background:#252525;"></div>
<div style="left:672px;top:1001px;width:13px;height:14px;background:#252525;"></div>
<div style="left:687px;top:1001px;width:13px;height:14px;background:#252525;"></div>
<div style="left:702px;top:1001px;width:13px;height:14px;background:#252525;"></div>
<svg style="left:596px;top:1002px;" width="14" height="12" viewBox="0 0 14 12"><path d="M2.500 7a4.500 4.500 0 0 1 9 0z" fill="none" stroke="#c8c8c8" stroke-width="1.200"/><path d="M7 3v6M0.500 7.200h13M3 10h3M8 10h3" stroke="#c8c8c8" stroke-width="1.100"/></svg>
<svg style="left:612px;top:1002px;" width="12" height="12" viewBox="0 0 12 12"><circle cx="6" cy="6" r="1.800" fill="none" stroke="#7d7d7d" stroke-width="1"/><path d="M6 0.500v2.500M6 9v2.500M0.500 6h2.500M9 6h2.500M2.200 2.200l1.700 1.700M8.100 8.100l1.700 1.700M9.800 2.200L8.100 3.900M3.900 8.100L2.200 9.800" stroke="#7d7d7d" stroke-width="1"/></svg>
<svg style="left:627px;top:1002px;" width="12" height="12" viewBox="0 0 12 12"><path d="M1.500 10.500L10.500 1.500" stroke="#c8c8c8" stroke-width="1.300"/></svg>
<svg style="left:733px;top:1001px;" width="14" height="14" viewBox="0 0 14 14"><path d="M7.0 6.2L7.4 6.1L7.9 6.2L8.3 6.6L8.5 7.1L8.5 7.8L8.2 8.5L7.5 9.0L6.6 9.2L5.6 9.0L4.8 8.4L4.2 7.4L4.1 6.2L4.5 5.0L5.5 4.0L6.8 3.4L8.3 3.5L9.8 4.2L10.8 5.5L11.3 7.1L11.1 9.0L10.1 10.6L8.4 11.7L6.4 12.0L4.3 11.5L2.6 10.1L1.5 8.1L1.3 5.8L2.1 3.5" fill="none" stroke="#a8a8a8" stroke-width="1.250" stroke-linejoin="round"/></svg>
<div style="left:752px;top:1000px;width:155px;height:16px;background:#222222;"></div>
<div class="t" style="left:760px;top:1000px;color:#cfcfcf;font-size:12px;letter-spacing:-0.90px;">None</div>
<svg style="left:894px;top:1005px;" width="9" height="6" viewBox="0 0 9 6"><path d="M1 1l3.500 3.500L8 1" fill="none" stroke="#b0b0b0" stroke-width="1.300"/></svg>
<div style="left:3px;top:1017px;width:925px;height:17px;background:#303030;"></div>
<div style="left:3px;top:1033px;width:925px;height:1px;background:#252525;"></div>
<div style="left:4px;top:1017px;width:18px;height:16px;background:#242424;"></div>
<svg style="left:5px;top:1020px;" width="14" height="10" viewBox="0 0 14 10"><path d="M0.500 5C3 1.200 11 1.200 13.500 5 11 8.800 3 8.800 0.500 5z" fill="#c4c4c4"/><circle cx="7" cy="5" r="2.300" fill="#222"/><circle cx="7" cy="5" r="1" fill="#c4c4c4"/></svg>
<div style="left:36px;top:1018px;width:12px;height:14px;background:#222222;"></div>
<div style="left:51px;top:1018px;width:12px;height:14px;background:#222222;"></div>
<svg style="left:75px;top:1020px;" width="7" height="10" viewBox="0 0 7 10"><path d="M1.500 1l4 4-4 4" fill="none" stroke="#8c8c8c" stroke-width="1.300"/></svg>
<div style="left:87px;top:1019px;width:12px;height:12px;background:#707070;"></div>
<div class="t" style="left:108px;top:1017px;color:#c0c0c0;font-size:12px;letter-spacing:-0.42px;">9</div>
<div class="t" style="left:138.500px;top:1016.5px;font-size:14px;font-weight:bold;color:#d0d0d0;font-family:'Liberation Serif',serif">T</div>
<svg style="left:152.5px;top:1019px;" width="11" height="12" viewBox="0 0 11 12"><path d="M3.300 0.500v11M7.900 0.500v11M0.500 3.500h10M0.500 8.300h10" stroke="#5fcfb4" stroke-width="1.150"/></svg>
<div class="t" style="left:173px;top:1017px;color:#cdcdcd;font-size:12px;letter-spacing:-0.34px;-webkit-text-stroke:0.350px #cdcdcd;">Right Panel 3</div>
<div style="left:597px;top:1018px;width:13px;height:14px;background:#252525;"></div>
<div style="left:672px;top:1018px;width:13px;height:14px;background:#252525;"></div>
<div style="left:687px;top:1018px;width:13px;height:14px;background:#252525;"></div>
<div style="left:702px;top:1018px;width:13px;height:14px;background:#252525;"></div>
<svg style="left:597px;top:1022px;" width="12" height="7" viewBox="0 0 12 7"><path d="M0.500 5.500h11M3 5a3 3 0 0 1 6 0" fill="none" stroke="#c8c8c8" stroke-width="1.100"/></svg>
<svg style="left:612px;top:1019px;" width="12" height="12" viewBox="0 0 12 12"><circle cx="6" cy="6" r="1.800" fill="none" stroke="#7d7d7d" stroke-width="1"/><path d="M6 0.500v2.500M6 9v2.500M0.500 6h2.500M9 6h2.500M2.200 2.200l1.700 1.700M8.100 8.100l1.700 1.700M9.800 2.200L8.100 3.900M3.900 8.100L2.200 9.800" stroke="#7d7d7d" stroke-width="1"/></svg>
<svg style="left:627px;top:1019px;" width="12" height="12" viewBox="0 0 12 12"><path d="M1.500 10.500L10.500 1.500" stroke="#c8c8c8" stroke-width="1.300"/></svg>
<svg style="left:733px;top:1018px;" width="14" height="14" viewBox="0 0 14 14"><path d="M7.0 6.2L7.4 6.1L7.9 6.2L8.3 6.6L8.5 7.1L8.5 7.8L8.2 8.5L7.5 9.0L6.6 9.2L5.6 9.0L4.8 8.4L4.2 7.4L4.1 6.2L4.5 5.0L5.5 4.0L6.8 3.4L8.3 3.5L9.8 4.2L10.8 5.5L11.3 7.1L11.1 9.0L10.1 10.6L8.4 11.7L6.4 12.0L4.3 11.5L2.6 10.1L1.5 8.1L1.3 5.8L2.1 3.5" fill="none" stroke="#a8a8a8" stroke-width="1.250" stroke-linejoin="round"/></svg>
<div style="left:752px;top:1017px;width:155px;height:16px;background:#222222;"></div>
<div class="t" style="left:760px;top:1017px;color:#cfcfcf;font-size:12px;letter-spacing:-0.90px;">None</div>
<svg style="left:894px;top:1022px;" width="9" height="6" viewBox="0 0 9 6"><path d="M1 1l3.500 3.500L8 1" fill="none" stroke="#b0b0b0" stroke-width="1.300"/></svg>
<div style="left:3px;top:1034px;width:925px;height:17px;background:#303030;"></div>
<div style="left:3px;top:1050px;width:925px;height:1px;background:#252525;"></div>
<div style="left:4px;top:1034px;width:18px;height:16px;background:#242424;"></div>
<svg style="left:5px;top:1037px;" width="14" height="10" viewBox="0 0 14 10"><path d="M0.500 5C3 1.200 11 1.200 13.500 5 11 8.800 3 8.800 0.500 5z" fill="#c4c4c4"/><circle cx="7" cy="5" r="2.300" fill="#222"/><circle cx="7" cy="5" r="1" fill="#c4c4c4"/></svg>
<div style="left:36px;top:1035px;width:12px;height:14px;background:#222222;"></div>
<div style="left:51px;top:1035px;width:12px;height:14px;background:#222222;"></div>
<svg style="left:75px;top:1037px;" width="7" height="10" viewBox="0 0 7 10"><path d="M1.500 1l4 4-4 4" fill="none" stroke="#8c8c8c" stroke-width="1.300"/></svg>
<div style="left:87px;top:1036px;width:12px;height:12px;background:#707070;"></div>
<div class="t" style="left:108px;top:1034px;color:#c0c0c0;font-size:12px;letter-spacing:-0.42px;">10</div>
<div class="t" style="left:138.500px;top:1033.5px;font-size:14px;font-weight:bold;color:#d0d0d0;font-family:'Liberation Serif',serif">T</div>
<svg style="left:152.5px;top:1036px;" width="11" height="12" viewBox="0 0 11 12"><path d="M3.300 0.500v11M7.900 0.500v11M0.500 3.500h10M0.500 8.300h10" stroke="#5fcfb4" stroke-width="1.150"/></svg>
<div class="t" style="left:173px;top:1034px;color:#cdcdcd;font-size:12px;letter-spacing:-0.34px;-webkit-text-stroke:0.350px #cdcdcd;">Right Panel 2</div>
<div style="left:597px;top:1035px;width:13px;height:14px;background:#252525;"></div>
<div style="left:672px;top:1035px;width:13px;height:14px;background:#252525;"></div>
<div style="left:687px;top:1035px;width:13px;height:14px;background:#252525;"></div>
<div style="left:702px;top:1035px;width:13px;height:14px;background:#252525;"></div>
<svg style="left:597px;top:1039px;" width="12" height="7" viewBox="0 0 12 7"><path d="M0.500 5.500h11M3 5a3 3 0 0 1 6 0" fill="none" stroke="#c8c8c8" stroke-width="1.100"/></svg>
<svg style="left:612px;top:1036px;" width="12" height="12" viewBox="0 0 12 12"><circle cx="6" cy="6" r="1.800" fill="none" stroke="#7d7d7d" stroke-width="1"/><path d="M6 0.500v2.500M6 9v2.500M0.500 6h2.500M9 6h2.500M2.200 2.200l1.700 1.700M8.100 8.100l1.700 1.700M9.800 2.200L8.100 3.900M3.900 8.100L2.200 9.800" stroke="#7d7d7d" stroke-width="1"/></svg>
<svg style="left:627px;top:1036px;" width="12" height="12" viewBox="0 0 12 12"><path d="M1.500 10.500L10.500 1.500" stroke="#c8c8c8" stroke-width="1.300"/></svg>
<svg style="left:733px;top:1035px;" width="14" height="14" viewBox="0 0 14 14"><path d="M7.0 6.2L7.4 6.1L7.9 6.2L8.3 6.6L8.5 7.1L8.5 7.8L8.2 8.5L7.5 9.0L6.6 9.2L5.6 9.0L4.8 8.4L4.2 7.4L4.1 6.2L4.5 5.0L5.5 4.0L6.8 3.4L8.3 3.5L9.8 4.2L10.8 5.5L11.3 7.1L11.1 9.0L10.1 10.6L8.4 11.7L6.4 12.0L4.3 11.5L2.6 10.1L1.5 8.1L1.3 5.8L2.1 3.5" fill="none" stroke="#a8a8a8" stroke-width="1.250" stroke-linejoin="round"/></svg>
<div style="left:752px;top:1034px;width:155px;height:16px;background:#222222;"></div>
<div class="t" style="left:760px;top:1034px;color:#cfcfcf;font-size:12px;letter-spacing:-0.90px;">None</div>
<svg style="left:894px;top:1039px;" width="9" height="6" viewBox="0 0 9 6"><path d="M1 1l3.500 3.500L8 1" fill="none" stroke="#b0b0b0" stroke-width="1.300"/></svg>
<div style="left:3px;top:1051px;width:925px;height:17px;background:#303030;"></div>
<div style="left:3px;top:1067px;width:925px;height:1px;background:#252525;"></div>
<div style="left:4px;top:1051px;width:18px;height:16px;background:#242424;"></div>
<svg style="left:5px;top:1054px;" width="14" height="10" viewBox="0 0 14 10"><path d="M0.500 5C3 1.200 11 1.200 13.500 5 11 8.800 3 8.800 0.500 5z" fill="#c4c4c4"/><circle cx="7" cy="5" r="2.300" fill="#222"/><circle cx="7" cy="5" r="1" fill="#c4c4c4"/></svg>
<div style="left:36px;top:1052px;width:12px;height:14px;background:#222222;"></div>
<div style="left:51px;top:1052px;width:12px;height:14px;background:#222222;"></div>
<svg style="left:75px;top:1054px;" width="7" height="10" viewBox="0 0 7 10"><path d="M1.500 1l4 4-4 4" fill="none" stroke="#8c8c8c" stroke-width="1.300"/></svg>
<div style="left:87px;top:1053px;width:12px;height:12px;background:#707070;"></div>
<div class="t" style="left:108px;top:1051px;color:#c0c0c0;font-size:12px;letter-spacing:-0.42px;">11</div>
<div class="t" style="left:138.500px;top:1050.5px;font-size:14px;font-weight:bold;color:#d0d0d0;font-family:'Liberation Serif',serif">T</div>
<svg style="left:152.5px;top:1053px;" width="11" height="12" viewBox="0 0 11 12"><path d="M3.300 0.500v11M7.900 0.500v11M0.500 3.500h10M0.500 8.300h10" stroke="#5fcfb4" stroke-width="1.150"/></svg>
<div class="t" style="left:173px;top:1051px;color:#cdcdcd;font-size:12px;letter-spacing:-0.30px;-webkit-text-stroke:0.350px #cdcdcd;">Right Panel</div>
<div style="left:597px;top:1052px;width:13px;height:14px;background:#252525;"></div>
<div style="left:672px;top:1052px;width:13px;height:14px;background:#252525;"></div>
<div style="left:687px;top:1052px;width:13px;height:14px;background:#252525;"></div>
<div style="left:702px;top:1052px;width:13px;height:14px;background:#252525;"></div>
<svg style="left:597px;top:1056px;" width="12" height="7" viewBox="0 0 12 7"><path d="M0.500 5.500h11M3 5a3 3 0 0 1 6 0" fill="none" stroke="#c8c8c8" stroke-width="1.100"/></svg>
<svg style="left:612px;top:1053px;" width="12" height="12" viewBox="0 0 12 12"><circle cx="6" cy="6" r="1.800" fill="none" stroke="#7d7d7d" stroke-width="1"/><path d="M6 0.500v2.500M6 9v2.500M0.500 6h2.500M9 6h2.500M2.200 2.200l1.700 1.700M8.100 8.100l1.700 1.700M9.800 2.200L8.100 3.900M3.900 8.100L2.200 9.800" stroke="#7d7d7d" stroke-width="1"/></svg>
<svg style="left:627px;top:1053px;" width="12" height="12" viewBox="0 0 12 12"><path d="M1.500 10.500L10.500 1.500" stroke="#c8c8c8" stroke-width="1.300"/></svg>
<svg style="left:733px;top:1052px;" width="14" height="14" viewBox="0 0 14 14"><path d="M7.0 6.2L7.4 6.1L7.9 6.2L8.3 6.6L8.5 7.1L8.5 7.8L8.2 8.5L7.5 9.0L6.6 9.2L5.6 9.0L4.8 8.4L4.2 7.4L4.1 6.2L4.5 5.0L5.5 4.0L6.8 3.4L8.3 3.5L9.8 4.2L10.8 5.5L11.3 7.1L11.1 9.0L10.1 10.6L8.4 11.7L6.4 12.0L4.3 11.5L2.6 10.1L1.5 8.1L1.3 5.8L2.1 3.5" fill="none" stroke="#a8a8a8" stroke-width="1.250" stroke-linejoin="round"/></svg>
<div style="left:752px;top:1051px;width:155px;height:16px;background:#222222;"></div>
<div class="t" style="left:760px;top:1051px;color:#cfcfcf;font-size:12px;letter-spacing:-0.90px;">None</div>
<svg style="left:894px;top:1056px;" width="9" height="6" viewBox="0 0 9 6"><path d="M1 1l3.500 3.500L8 1" fill="none" stroke="#b0b0b0" stroke-width="1.300"/></svg>
<div style="left:928px;top:706px;width:992px;height:374px;background:#232323;"></div>
<div style="left:927px;top:742px;width:1px;height:317px;background:#171717;"></div>
<div style="left:931px;top:713px;width:964px;height:8px;background:#46433f;border-radius:2px"></div>
<div style="left:935px;top:713px;width:133px;height:8px;background:#777777;border-top:1px solid #111;border-bottom:1px solid #111"></div>
<div style="left:928px;top:713px;width:7px;height:8px;background:#4a93e2;border-radius:4px 0 0 4px"></div>
<div style="left:1069px;top:713px;width:7px;height:8px;background:#4a93e2;border-radius:0 4px 4px 0"></div>
<div style="left:935px;top:736px;width:1px;height:5px;background:#a0a0a0;"></div>
<div class="t" style="left:928px;top:721px;color:#b8b8b8;font-size:11.5px;letter-spacing:-1.14px;">0:00f</div>
<div style="left:1001px;top:736px;width:1px;height:5px;background:#a0a0a0;"></div>
<div class="t" style="left:992.6px;top:721px;color:#b8b8b8;font-size:11.5px;letter-spacing:-0.59px;">10f</div>
<div style="left:1067px;top:736px;width:1px;height:5px;background:#a0a0a0;"></div>
<div class="t" style="left:1058.6px;top:721px;color:#b8b8b8;font-size:11.5px;letter-spacing:-0.59px;">20f</div>
<div style="left:1133px;top:733px;width:1px;height:8px;background:#a0a0a0;"></div>
<div class="t" style="left:1117.2px;top:721px;color:#b8b8b8;font-size:11.5px;letter-spacing:-0.47px;">01:00f</div>
<div style="left:1199px;top:736px;width:1px;height:5px;background:#a0a0a0;"></div>
<div class="t" style="left:1190.6px;top:721px;color:#b8b8b8;font-size:11.5px;letter-spacing:-0.59px;">10f</div>
<div style="left:1265px;top:736px;width:1px;height:5px;background:#a0a0a0;"></div>
<div class="t" style="left:1256.6px;top:721px;color:#b8b8b8;font-size:11.5px;letter-spacing:-0.59px;">20f</div>
<div style="left:1331px;top:733px;width:1px;height:8px;background:#a0a0a0;"></div>
<div class="t" style="left:1315.2px;top:721px;color:#b8b8b8;font-size:11.5px;letter-spacing:-0.47px;">02:00f</div>
<div style="left:1397px;top:736px;width:1px;height:5px;background:#a0a0a0;"></div>
<div class="t" style="left:1388.6px;top:721px;color:#b8b8b8;font-size:11.5px;letter-spacing:-0.59px;">10f</div>
<div style="left:1463px;top:736px;width:1px;height:5px;background:#a0a0a0;"></div>
<div class="t" style="left:1454.6px;top:721px;color:#b8b8b8;font-size:11.5px;letter-spacing:-0.59px;">20f</div>
<div style="left:1529px;top:733px;width:1px;height:8px;background:#a0a0a0;"></div>
<div class="t" style="left:1513.2px;top:721px;color:#b8b8b8;font-size:11.5px;letter-spacing:-0.47px;">03:00f</div>
<div style="left:1595px;top:736px;width:1px;height:5px;background:#a0a0a0;"></div>
<div class="t" style="left:1586.6px;top:721px;color:#b8b8b8;font-size:11.5px;letter-spacing:-0.59px;">10f</div>
<div style="left:1661px;top:736px;width:1px;height:5px;background:#a0a0a0;"></div>
<div class="t" style="left:1652.6px;top:721px;color:#b8b8b8;font-size:11.5px;letter-spacing:-0.59px;">20f</div>
<div style="left:1727px;top:733px;width:1px;height:8px;background:#a0a0a0;"></div>
<div class="t" style="left:1711.2px;top:721px;color:#b8b8b8;font-size:11.5px;letter-spacing:-0.47px;">04:00f</div>
<div style="left:1793px;top:736px;width:1px;height:5px;background:#a0a0a0;"></div>
<div class="t" style="left:1784.6px;top:721px;color:#b8b8b8;font-size:11.5px;letter-spacing:-0.59px;">10f</div>
<div style="left:1859px;top:736px;width:1px;height:5px;background:#a0a0a0;"></div>
<div class="t" style="left:1850.6px;top:721px;color:#b8b8b8;font-size:11.5px;letter-spacing:-0.59px;">20f</div>
<div style="left:928px;top:741px;width:992px;height:1px;background:#0c0c0c;"></div>
<div style="left:928px;top:742px;width:8px;height:317px;background:#2b2b2b;"></div>
<div style="left:936px;top:742px;width:965px;height:16px;background:#666666;"></div>
<div style="left:928px;top:743px;width:6px;height:14px;background:#3f8fe6;border-radius:3px 0 0 3px"></div>
<div style="left:936px;top:758px;width:965px;height:3px;background:#3fc545;"></div>
<div style="left:936px;top:761px;width:965px;height:1px;background:#1a1a1a;"></div>
<div style="left:936px;top:762px;width:965px;height:297px;background:#333333;"></div>
<div style="left:936px;top:762px;width:965px;height:16px;background:#75758c;"></div>
<div style="left:936px;top:795px;width:965px;height:1px;background:#272727;"></div>
<div style="left:936px;top:812px;width:965px;height:1px;background:#272727;"></div>
<div style="left:936px;top:846px;width:965px;height:1px;background:#272727;"></div>
<div style="left:936px;top:863px;width:965px;height:1px;background:#272727;"></div>
<div style="left:936px;top:880px;width:965px;height:1px;background:#272727;"></div>
<div style="left:936px;top:897px;width:965px;height:1px;background:#272727;"></div>
<div style="left:936px;top:914px;width:965px;height:1px;background:#272727;"></div>
<div style="left:936px;top:813px;width:965px;height:16px;background:linear-gradient(#8a90e4,#666cd0 30%,#5c62c4 75%,#555ab4);"></div>
<div style="left:936px;top:915px;width:965px;height:16px;background:#565a90;"></div>
<div style="left:936px;top:931px;width:965px;height:1px;background:#2a2a2a;"></div>
<div style="left:936px;top:932px;width:965px;height:16px;background:#565a90;"></div>
<div style="left:936px;top:948px;width:965px;height:1px;background:#2a2a2a;"></div>
<div style="left:936px;top:949px;width:965px;height:16px;background:#565a90;"></div>
<div style="left:936px;top:965px;width:965px;height:1px;background:#2a2a2a;"></div>
<div style="left:936px;top:966px;width:965px;height:16px;background:#565a90;"></div>
<div style="left:936px;top:982px;width:965px;height:1px;background:#2a2a2a;"></div>
<div style="left:936px;top:983px;width:965px;height:16px;background:#565a90;"></div>
<div style="left:936px;top:999px;width:965px;height:1px;background:#2a2a2a;"></div>
<div style="left:936px;top:1000px;width:965px;height:16px;background:#565a90;"></div>
<div style="left:936px;top:1016px;width:965px;height:1px;background:#2a2a2a;"></div>
<div style="left:936px;top:1017px;width:965px;height:16px;background:#5d5d5d;"></div>
<div style="left:936px;top:1033px;width:965px;height:1px;background:#2a2a2a;"></div>
<div style="left:936px;top:1034px;width:965px;height:16px;background:#5d5d5d;"></div>
<div style="left:936px;top:1050px;width:965px;height:1px;background:#2a2a2a;"></div>
<div style="left:936px;top:1051px;width:965px;height:16px;background:#5d5d5d;"></div>
<div style="left:936px;top:1067px;width:965px;height:1px;background:#2a2a2a;"></div>
<div style="left:935px;top:741px;width:1px;height:318px;background:#5b93d6;"></div>
<svg style="left:928px;top:727px;" width="15" height="14" viewBox="0 0 15 14"><path d="M0.500 0.500h14v4l-7 9-7-9z" fill="#3f8fe6"/></svg>
<svg style="left:931px;top:781px;" width="9" height="12" viewBox="0 0 9 12"><path d="M2 1h5M2 11h5M4.500 1v10" stroke="#d2d8e6" stroke-width="1.400" fill="none"/></svg>
<svg style="left:931px;top:798px;" width="9" height="12" viewBox="0 0 9 12"><path d="M2 1h5M2 11h5M4.500 1v10" stroke="#d2d8e6" stroke-width="1.400" fill="none"/></svg>
<svg style="left:931px;top:832px;" width="9" height="12" viewBox="0 0 9 12"><path d="M2 1h5M2 11h5M4.500 1v10" stroke="#d2d8e6" stroke-width="1.400" fill="none"/></svg>
<svg style="left:931px;top:849px;" width="9" height="12" viewBox="0 0 9 12"><path d="M2 1h5M2 11h5M4.500 1v10" stroke="#d2d8e6" stroke-width="1.400" fill="none"/></svg>
<svg style="left:931px;top:866px;" width="9" height="12" viewBox="0 0 9 12"><path d="M2 1h5M2 11h5M4.500 1v10" stroke="#d2d8e6" stroke-width="1.400" fill="none"/></svg>
<svg style="left:931px;top:883px;" width="9" height="12" viewBox="0 0 9 12"><path d="M2 1h5M2 11h5M4.500 1v10" stroke="#d2d8e6" stroke-width="1.400" fill="none"/></svg>
<svg style="left:931px;top:900px;" width="9" height="12" viewBox="0 0 9 12"><path d="M2 1h5M2 11h5M4.500 1v10" stroke="#d2d8e6" stroke-width="1.400" fill="none"/></svg>
<svg style="left:1904px;top:744px;" width="12" height="15" viewBox="0 0 12 15"><path d="M1 0.500h10v8.500l-5 5.500-5-5.500z" fill="#c6c6c6"/></svg>
<svg style="left:1902px;top:764px;" width="15" height="14" viewBox="0 0 15 14"><rect x="7" y="3" width="7.500" height="7" fill="#c6c6c6"/><path d="M1 9l6-7v8z" fill="none" stroke="#c6c6c6" stroke-width="1.100"/><circle cx="6.500" cy="10" r="2.500" fill="#232323" stroke="#c6c6c6" stroke-width="1.100"/></svg>
<div style="left:0px;top:1060px;width:1920px;height:20px;background:#212121;"></div>
<div style="left:0px;top:1059px;width:1920px;height:1px;background:#121212;"></div>
<div style="left:0px;top:1077px;width:1920px;height:3px;background:#181818;"></div>
<div style="left:4px;top:1061px;width:19px;height:16px;background:#1e2a3a;"></div>
<svg style="left:6px;top:1061px;" width="15" height="15" viewBox="0 0 15 15"><rect x="1" y="1" width="8" height="8" fill="none" stroke="#3f8fe6" stroke-width="1.200"/><rect x="4" y="4" width="8" height="8" fill="#1e2a3a" stroke="#3f8fe6" stroke-width="1.200"/><rect x="7" y="7" width="6" height="6" fill="none" stroke="#3f8fe6" stroke-width="1"/></svg>
<svg style="left:24px;top:1061px;" width="15" height="15" viewBox="0 0 15 15"><circle cx="6" cy="6" r="4.500" fill="none" stroke="#c4c4c4" stroke-width="1.300"/><rect x="6" y="6" width="7" height="7" fill="#232323" stroke="#c4c4c4" stroke-width="1.300"/></svg>
<svg style="left:43px;top:1061px;" width="13" height="15" viewBox="0 0 13 15"><path d="M3.500 1h6v3l2.500 3.500-2.500 3.500v3h-6v-3L1 7.500 3.500 4z" fill="#b0b0b0"/></svg>
<div style="left:595px;top:1061px;width:133px;height:17px;background:#262626;border:1px solid #343434"></div>
<div class="t" style="left:600px;top:1060px;color:#b4b4b4;font-size:12px;letter-spacing:-0.44px;">Toggle Switches / Modes</div>
<svg style="left:933px;top:1064px;" width="10" height="7" viewBox="0 0 10 7"><path d="M1 6l4-4 4 4z" fill="#c0c0c0"/></svg>
<div style="left:958px;top:1068px;width:32px;height:1px;background:#444444;"></div>
<svg style="left:991px;top:1063px;" width="11" height="11" viewBox="0 0 11 11"><circle cx="5.500" cy="5.500" r="3.800" fill="#232323" stroke="#c4c4c4" stroke-width="1.600"/></svg>
<svg style="left:1014px;top:1062px;" width="17" height="9" viewBox="0 0 17 9"><path d="M0.500 8.500l5-6 3 3.500 2.500-3 5 5.500z" fill="#c8c8c8"/></svg>
<div style="left:243px;top:324px;width:514px;height:322px;background:#232323;border-radius:8px;overflow:hidden;box-shadow:0 0 0 1px #383838,0 1px 5px rgba(0,0,0,.35)"><div style="left:0;top:0;width:514px;height:30px;background:#ffffff"></div></div>
<div class="t" style="left:251px;top:331px;color:#111111;font-size:12.5px;letter-spacing:-0.39px;">Shape Fill Color</div>
<svg style="left:736px;top:332px;" width="12" height="12" viewBox="0 0 12 12"><path d="M1 1l10 10M11 1L1 11" stroke="#222" stroke-width="1.200"/></svg>
<div style="left:261px;top:372px;width:256px;height:256px;background:linear-gradient(to top,#000,rgba(0,0,0,0)),linear-gradient(to right,#fff,#1a94f2)"></div>
<svg style="left:503px;top:532px;" width="12" height="12" viewBox="0 0 12 12"><circle cx="6" cy="6" r="4.500" fill="none" stroke="#e8f2fa" stroke-width="1.200"/></svg>
<svg style="left:261px;top:570px;" width="20" height="20" viewBox="0 0 20 20"><circle cx="10" cy="10" r="8" fill="none" stroke="#e6e6e6" stroke-width="1.100"/><circle cx="10" cy="10" r="6" fill="rgba(120,120,120,.35)" stroke="#e6e6e6" stroke-width="1"/></svg>
<div style="left:531px;top:372px;width:19px;height:256px;background:linear-gradient(to bottom,#ff0000 0%,#ff00ff 16.600%,#0000ff 33.300%,#00ffff 50%,#00ff00 66.600%,#ffff00 83.300%,#ff0000 100%)"></div>
<svg style="left:522px;top:477px;" width="6" height="9" viewBox="0 0 6 9"><path d="M1 1l3.500 3.500L1 8" fill="none" stroke="#b8b8b8" stroke-width="1.100"/></svg>
<svg style="left:552px;top:477px;" width="6" height="9" viewBox="0 0 6 9"><path d="M5 1L1.500 4.500 5 8" fill="none" stroke="#b8b8b8" stroke-width="1.100"/></svg>
<div style="left:564px;top:371px;width:62px;height:70px;background:#07365e;box-shadow:0 0 2px #0c4070"></div>
<svg style="left:566px;top:453px;" width="14" height="14" viewBox="0 0 14 14"><circle cx="7" cy="7" r="6" fill="#9c9c9c"/></svg>
<div class="t" style="left:583px;top:452px;color:#a8a8a8;font-size:11px;letter-spacing:-0.39px;">H:</div>
<div class="t" style="left:595px;top:451px;color:#4587d2;font-size:12px;letter-spacing:-1.01px;">206</div>
<div class="t" style="left:616px;top:450px;color:#a8a8a8;font-size:11px;letter-spacing:-0.39px;">°</div>
<svg style="left:566px;top:476px;" width="14" height="14" viewBox="0 0 14 14"><circle cx="7" cy="7" r="5.500" fill="#1c1c1c" stroke="#969696" stroke-width="2"/></svg>
<div class="t" style="left:583px;top:475px;color:#a8a8a8;font-size:11px;letter-spacing:-0.39px;">S:</div>
<div class="t" style="left:595px;top:474px;color:#4587d2;font-size:12px;letter-spacing:-1.35px;">97</div>
<div class="t" style="left:611px;top:474px;color:#a8a8a8;font-size:11px;letter-spacing:-0.39px;">%</div>
<svg style="left:566px;top:499px;" width="14" height="14" viewBox="0 0 14 14"><circle cx="7" cy="7" r="5.500" fill="#1c1c1c" stroke="#969696" stroke-width="2"/></svg>
<div class="t" style="left:583px;top:498px;color:#a8a8a8;font-size:11px;letter-spacing:-0.39px;">B:</div>
<div class="t" style="left:595px;top:497px;color:#4587d2;font-size:12px;letter-spacing:-1.35px;">35</div>
<div class="t" style="left:611px;top:497px;color:#a8a8a8;font-size:11px;letter-spacing:-0.39px;">%</div>
<svg style="left:566px;top:528px;" width="14" height="14" viewBox="0 0 14 14"><circle cx="7" cy="7" r="5.500" fill="#1c1c1c" stroke="#969696" stroke-width="2"/></svg>
<div class="t" style="left:583px;top:527px;color:#a8a8a8;font-size:11px;letter-spacing:-0.39px;">R:</div>
<div class="t" style="left:595px;top:525px;color:#4587d2;font-size:12px;letter-spacing:-0.94px;">0,0096</div>
<svg style="left:566px;top:551px;" width="14" height="14" viewBox="0 0 14 14"><circle cx="7" cy="7" r="5.500" fill="#1c1c1c" stroke="#969696" stroke-width="2"/></svg>
<div class="t" style="left:583px;top:550px;color:#a8a8a8;font-size:11px;letter-spacing:-0.39px;">G:</div>
<div class="t" style="left:595px;top:548px;color:#4587d2;font-size:12px;letter-spacing:-0.94px;">0,2013</div>
<svg style="left:566px;top:574px;" width="14" height="14" viewBox="0 0 14 14"><circle cx="7" cy="7" r="5.500" fill="#1c1c1c" stroke="#969696" stroke-width="2"/></svg>
<div class="t" style="left:583px;top:573px;color:#a8a8a8;font-size:11px;letter-spacing:-0.39px;">B:</div>
<div class="t" style="left:595px;top:571px;color:#4587d2;font-size:12px;letter-spacing:-1.01px;">0,349</div>
<div class="t" style="left:561px;top:601px;color:#8a8a8a;font-size:9px;letter-spacing:-0.32px;">#</div>
<div style="left:569px;top:599px;width:60px;height:20px;background:#eef2f8;border:1px solid #9db4d8;border-radius:3px"></div>
<div style="left:573px;top:602px;width:39px;height:14px;background:#2f6fc6;"></div>
<div class="t" style="left:575px;top:601px;color:#ffffff;font-size:11.5px;letter-spacing:-0.47px;">023359</div>
<div style="left:655px;top:367px;width:90px;height:19px;background:transparent;border:1.500px solid #e4e4e4;border-radius:10px"></div>
<div class="t" style="left:700px;top:368px;color:#f0f0f0;font-size:12px;letter-spacing:0.00px;transform:translateX(-50%);">OK</div>
<div style="left:655px;top:397px;width:90px;height:19px;background:transparent;border:1.500px solid #7c7c7c;border-radius:10px"></div>
<div class="t" style="left:700px;top:398px;color:#9c9c9c;font-size:12px;letter-spacing:-0.42px;transform:translateX(-50%);">Cancel</div>
<div style="left:655px;top:463px;width:22px;height:22px;background:#1c1c1c;border:1px solid #343434;border-radius:2px"></div>
<svg style="left:658px;top:466px;" width="16" height="16" viewBox="0 0 16 16"><path d="M2 14l1-3 6-6 2 2-6 6z" fill="none" stroke="#d0d0d0" stroke-width="1.200"/><path d="M9 4l1.500-1.500a1.800 1.800 0 0 1 3 3L12 7z" fill="#d0d0d0"/><path d="M8 3.500l4.500 4.500" stroke="#d0d0d0" stroke-width="1.600"/></svg>
<div style="left:655px;top:495px;width:14px;height:14px;background:#9a9a9a;border-radius:2px"></div>
<svg style="left:655px;top:495px;" width="14" height="14" viewBox="0 0 14 14"><path d="M3 7l3 3 5-6.500" fill="none" stroke="#232323" stroke-width="1.800"/></svg>
<div class="t" style="left:673px;top:494px;color:#a8a8a8;font-size:12px;letter-spacing:-0.45px;">Preview</div>
</div></body></html>
